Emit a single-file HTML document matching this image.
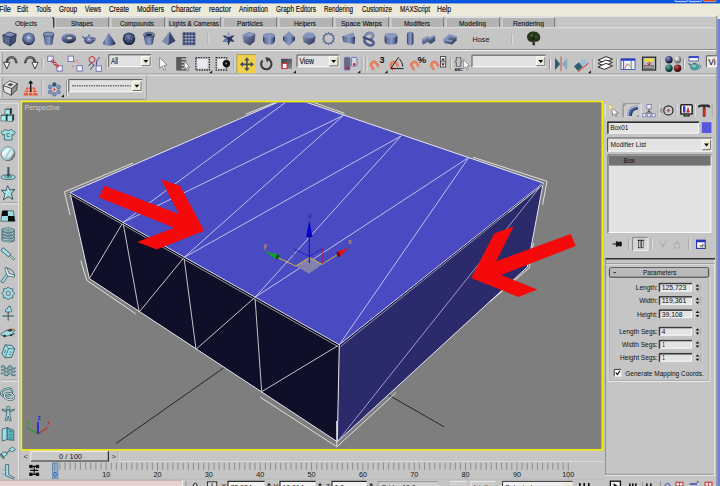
<!DOCTYPE html>
<html lang="en"><head><meta charset="utf-8"><title>3ds max - Box01</title>
<style>html,body{margin:0;padding:0;background:#c5c5c5;overflow:hidden}body{width:720px;height:486px;position:relative}svg{display:block;position:absolute;left:0;top:0}text{font-family:"Liberation Sans", sans-serif;}</style></head><body>
<svg width="720" height="486" viewBox="0 0 720 486">
<rect x="0" y="0" width="720" height="486" fill="#c5c5c5" />
<defs><linearGradient id="tb" x1="0" y1="0" x2="0" y2="1"><stop offset="0" stop-color="#0b5be6"/><stop offset="1" stop-color="#0a4fd6"/></linearGradient></defs>
<rect x="0" y="0" width="720" height="3.6" fill="url(#tb)" />
<rect x="675" y="-3" width="12.5" height="4.6" fill="#2a63e0" stroke="#e8eefc" stroke-width="0.8" rx="1"/>
<rect x="689" y="-3" width="12.5" height="4.6" fill="#2a63e0" stroke="#e8eefc" stroke-width="0.8" rx="1"/>
<rect x="703.5" y="-3" width="12.5" height="4.6" fill="#dd4a22" stroke="#f0c8b8" stroke-width="0.6" rx="1"/>
<rect x="0" y="3.6" width="720" height="12" fill="#ece9d8" />
<text x="-1" y="12.49" font-size="8.3" fill="#0c0c0c" textLength="12" lengthAdjust="spacingAndGlyphs" stroke="#0c0c0c" stroke-width="0.15">File</text>
<text x="17" y="12.49" font-size="8.3" fill="#0c0c0c" textLength="11" lengthAdjust="spacingAndGlyphs" stroke="#0c0c0c" stroke-width="0.15">Edit</text>
<text x="36" y="12.49" font-size="8.3" fill="#0c0c0c" textLength="15" lengthAdjust="spacingAndGlyphs" stroke="#0c0c0c" stroke-width="0.15">Tools</text>
<text x="59" y="12.49" font-size="8.3" fill="#0c0c0c" textLength="18" lengthAdjust="spacingAndGlyphs" stroke="#0c0c0c" stroke-width="0.15">Group</text>
<text x="85" y="12.49" font-size="8.3" fill="#0c0c0c" textLength="16" lengthAdjust="spacingAndGlyphs" stroke="#0c0c0c" stroke-width="0.15">Views</text>
<text x="109" y="12.49" font-size="8.3" fill="#0c0c0c" textLength="20" lengthAdjust="spacingAndGlyphs" stroke="#0c0c0c" stroke-width="0.15">Create</text>
<text x="137" y="12.49" font-size="8.3" fill="#0c0c0c" textLength="27" lengthAdjust="spacingAndGlyphs" stroke="#0c0c0c" stroke-width="0.15">Modifiers</text>
<text x="171" y="12.49" font-size="8.3" fill="#0c0c0c" textLength="30" lengthAdjust="spacingAndGlyphs" stroke="#0c0c0c" stroke-width="0.15">Character</text>
<text x="209" y="12.49" font-size="8.3" fill="#0c0c0c" textLength="22" lengthAdjust="spacingAndGlyphs" stroke="#0c0c0c" stroke-width="0.15">reactor</text>
<text x="239" y="12.49" font-size="8.3" fill="#0c0c0c" textLength="29" lengthAdjust="spacingAndGlyphs" stroke="#0c0c0c" stroke-width="0.15">Animation</text>
<text x="276" y="12.49" font-size="8.3" fill="#0c0c0c" textLength="40" lengthAdjust="spacingAndGlyphs" stroke="#0c0c0c" stroke-width="0.15">Graph Editors</text>
<text x="324" y="12.49" font-size="8.3" fill="#0c0c0c" textLength="29" lengthAdjust="spacingAndGlyphs" stroke="#0c0c0c" stroke-width="0.15">Rendering</text>
<text x="362" y="12.49" font-size="8.3" fill="#0c0c0c" textLength="30" lengthAdjust="spacingAndGlyphs" stroke="#0c0c0c" stroke-width="0.15">Customize</text>
<text x="400" y="12.49" font-size="8.3" fill="#0c0c0c" textLength="30" lengthAdjust="spacingAndGlyphs" stroke="#0c0c0c" stroke-width="0.15">MAXScript</text>
<text x="437" y="12.49" font-size="8.3" fill="#0c0c0c" textLength="14" lengthAdjust="spacingAndGlyphs" stroke="#0c0c0c" stroke-width="0.15">Help</text>
<line x1="0" y1="16" x2="716.5" y2="16" stroke="#fafafa" stroke-width="1" />
<rect x="716.3" y="16" width="1.2" height="470" fill="#8c8c8c" />
<rect x="717.5" y="19" width="2.5" height="467" fill="#6f82dc" />
<rect x="717.5" y="15.6" width="2.5" height="3.4" fill="#ece9d8" />
<text x="15" y="25.84" font-size="7.9" fill="#111" textLength="22" lengthAdjust="spacingAndGlyphs" stroke="#111" stroke-width="0.12">Objects</text>
<rect x="55" y="17.6" width="54" height="9.6" fill="#b3b3b3" />
<line x1="55" y1="17.6" x2="109" y2="17.6" stroke="#ebebeb" stroke-width="0.8" />
<line x1="55.3" y1="17.6" x2="55.3" y2="27.2" stroke="#dcdcdc" stroke-width="0.7" />
<line x1="108.6" y1="17.4" x2="108.6" y2="27.4" stroke="#6e6e6e" stroke-width="0.9" />
<text x="71" y="25.84" font-size="7.9" fill="#111" textLength="22" lengthAdjust="spacingAndGlyphs" stroke="#111" stroke-width="0.12">Shapes</text>
<rect x="111" y="17.6" width="54" height="9.6" fill="#b3b3b3" />
<line x1="111" y1="17.6" x2="165" y2="17.6" stroke="#ebebeb" stroke-width="0.8" />
<line x1="111.3" y1="17.6" x2="111.3" y2="27.2" stroke="#dcdcdc" stroke-width="0.7" />
<line x1="164.6" y1="17.4" x2="164.6" y2="27.4" stroke="#6e6e6e" stroke-width="0.9" />
<text x="120" y="25.84" font-size="7.9" fill="#111" textLength="34" lengthAdjust="spacingAndGlyphs" stroke="#111" stroke-width="0.12">Compounds</text>
<rect x="167" y="17.6" width="54" height="9.6" fill="#b3b3b3" />
<line x1="167" y1="17.6" x2="221" y2="17.6" stroke="#ebebeb" stroke-width="0.8" />
<line x1="167.3" y1="17.6" x2="167.3" y2="27.2" stroke="#dcdcdc" stroke-width="0.7" />
<line x1="220.6" y1="17.4" x2="220.6" y2="27.4" stroke="#6e6e6e" stroke-width="0.9" />
<text x="169" y="25.84" font-size="7.9" fill="#111" textLength="50" lengthAdjust="spacingAndGlyphs" stroke="#111" stroke-width="0.12">Lights &amp; Cameras</text>
<rect x="223" y="17.6" width="54" height="9.6" fill="#b3b3b3" />
<line x1="223" y1="17.6" x2="277" y2="17.6" stroke="#ebebeb" stroke-width="0.8" />
<line x1="223.3" y1="17.6" x2="223.3" y2="27.2" stroke="#dcdcdc" stroke-width="0.7" />
<line x1="276.6" y1="17.4" x2="276.6" y2="27.4" stroke="#6e6e6e" stroke-width="0.9" />
<text x="237" y="25.84" font-size="7.9" fill="#111" textLength="26" lengthAdjust="spacingAndGlyphs" stroke="#111" stroke-width="0.12">Particles</text>
<rect x="279" y="17.6" width="54" height="9.6" fill="#b3b3b3" />
<line x1="279" y1="17.6" x2="333" y2="17.6" stroke="#ebebeb" stroke-width="0.8" />
<line x1="279.3" y1="17.6" x2="279.3" y2="27.2" stroke="#dcdcdc" stroke-width="0.7" />
<line x1="332.6" y1="17.4" x2="332.6" y2="27.4" stroke="#6e6e6e" stroke-width="0.9" />
<text x="294" y="25.84" font-size="7.9" fill="#111" textLength="22" lengthAdjust="spacingAndGlyphs" stroke="#111" stroke-width="0.12">Helpers</text>
<rect x="335" y="17.6" width="54" height="9.6" fill="#b3b3b3" />
<line x1="335" y1="17.6" x2="389" y2="17.6" stroke="#ebebeb" stroke-width="0.8" />
<line x1="335.3" y1="17.6" x2="335.3" y2="27.2" stroke="#dcdcdc" stroke-width="0.7" />
<line x1="388.6" y1="17.4" x2="388.6" y2="27.4" stroke="#6e6e6e" stroke-width="0.9" />
<text x="341" y="25.84" font-size="7.9" fill="#111" textLength="41" lengthAdjust="spacingAndGlyphs" stroke="#111" stroke-width="0.12">Space Warps</text>
<rect x="391" y="17.6" width="53" height="9.6" fill="#b3b3b3" />
<line x1="391" y1="17.6" x2="444" y2="17.6" stroke="#ebebeb" stroke-width="0.8" />
<line x1="391.3" y1="17.6" x2="391.3" y2="27.2" stroke="#dcdcdc" stroke-width="0.7" />
<line x1="443.6" y1="17.4" x2="443.6" y2="27.4" stroke="#6e6e6e" stroke-width="0.9" />
<text x="404" y="25.84" font-size="7.9" fill="#111" textLength="26" lengthAdjust="spacingAndGlyphs" stroke="#111" stroke-width="0.12">Modifiers</text>
<rect x="446" y="17.6" width="54" height="9.6" fill="#b3b3b3" />
<line x1="446" y1="17.6" x2="500" y2="17.6" stroke="#ebebeb" stroke-width="0.8" />
<line x1="446.3" y1="17.6" x2="446.3" y2="27.2" stroke="#dcdcdc" stroke-width="0.7" />
<line x1="499.6" y1="17.4" x2="499.6" y2="27.4" stroke="#6e6e6e" stroke-width="0.9" />
<text x="459" y="25.84" font-size="7.9" fill="#111" textLength="27" lengthAdjust="spacingAndGlyphs" stroke="#111" stroke-width="0.12">Modeling</text>
<rect x="502" y="17.6" width="53" height="9.6" fill="#b3b3b3" />
<line x1="502" y1="17.6" x2="555" y2="17.6" stroke="#ebebeb" stroke-width="0.8" />
<line x1="502.3" y1="17.6" x2="502.3" y2="27.2" stroke="#dcdcdc" stroke-width="0.7" />
<line x1="554.6" y1="17.4" x2="554.6" y2="27.4" stroke="#6e6e6e" stroke-width="0.9" />
<text x="513" y="25.84" font-size="7.9" fill="#111" textLength="31" lengthAdjust="spacingAndGlyphs" stroke="#111" stroke-width="0.12">Rendering</text>
<polyline points="52.6,17.2 53.8,19 53.8,27.6" fill="none" stroke="#111" stroke-width="1.1" />
<line x1="0" y1="27.7" x2="52.5" y2="27.7" stroke="#c5c5c5" stroke-width="1" />
<line x1="54.5" y1="27.7" x2="716" y2="27.7" stroke="#e6e6e6" stroke-width="0.8" />
<defs>
<linearGradient id="gH" x1="0" y1="0" x2="1" y2="0"><stop offset="0" stop-color="#2c3654"/><stop offset="0.18" stop-color="#6676a2"/><stop offset="0.55" stop-color="#8a99c2"/><stop offset="0.8" stop-color="#55648e"/><stop offset="1" stop-color="#252e4c"/></linearGradient>
<linearGradient id="gV" x1="0" y1="0" x2="0" y2="1"><stop offset="0" stop-color="#8c9ac2"/><stop offset="1" stop-color="#2c3658"/></linearGradient>
<linearGradient id="gD" x1="0" y1="0" x2="1" y2="1"><stop offset="0" stop-color="#93a1c8"/><stop offset="1" stop-color="#262f4e"/></linearGradient>
<radialGradient id="gS" cx="0.5" cy="0.4" r="0.62"><stop offset="0" stop-color="#f4f6fc"/><stop offset="0.18" stop-color="#8c9bc2"/><stop offset="0.6" stop-color="#5a6a96"/><stop offset="1" stop-color="#161c30"/></radialGradient>
<radialGradient id="gS2" cx="0.45" cy="0.35" r="0.7"><stop offset="0" stop-color="#7a88b0"/><stop offset="0.45" stop-color="#39456c"/><stop offset="1" stop-color="#10162a"/></radialGradient>
</defs>
<g transform="translate(9.6 38.6)">
<polygon points="-6.8,-3.4 -0.5,-6.6 6.6,-4.4 1,-1.2" fill="#808fb8" stroke="#262e4a" stroke-width="0.7" stroke-linejoin="round"/>
<polygon points="-6.8,-3.4 1,-1.2 0.6,7.4 -5.8,3.8" fill="#5a6994" stroke="#262e4a" stroke-width="0.7" stroke-linejoin="round"/>
<polygon points="1,-1.2 6.6,-4.4 5.8,3.4 0.6,7.4" fill="#414e78" stroke="#262e4a" stroke-width="0.7" stroke-linejoin="round"/>
</g>
<g transform="translate(28.6 38.6)">
<circle cx="0" cy="0.2" r="6.4" fill="url(#gS)"/>
</g>
<g transform="translate(48.6 38.6)">
<path d="M-5.2,-4.2 L-3.8,5.4 A3.9,1.6 0 0 0 3.9,5.4 L5.3,-4.2 Z" fill="url(#gH)"/>
<ellipse cx="0" cy="-4.4" rx="5.3" ry="2.1" fill="#8392ba" stroke="#2b3452" stroke-width="0.6"/>
</g>
<g transform="translate(69 38.4)">
<linearGradient id="gT" x1="0.2" y1="0" x2="0.6" y2="1"><stop offset="0" stop-color="#94a2ca"/><stop offset="0.45" stop-color="#5d6c98"/><stop offset="1" stop-color="#1c2440"/></linearGradient>
<ellipse cx="-0.2" cy="0" rx="7.3" ry="5" fill="url(#gT)"/>
<ellipse cx="0.2" cy="-0.9" rx="3.1" ry="1.9" fill="#2c3658"/>
<ellipse cx="0.3" cy="-0.4" rx="2.9" ry="1.4" fill="#c5c5c5"/>
</g>
<g transform="translate(89 39.6)">
<ellipse cx="0" cy="0.6" rx="4.7" ry="3.9" fill="url(#gS)"/>
<path d="M-3.8,0 L-7.2,-3 L-6.6,-3.6 L-3,-1.6 Z" fill="#4a5884"/>
<path d="M3.8,-1.6 C6.8,-2.8 6.8,1.4 4.2,1.8" fill="none" stroke="#3f4c78" stroke-width="1.1"/>
<ellipse cx="0" cy="-3" rx="2.6" ry="0.9" fill="#8e9cc8"/>
<circle cx="0" cy="-4.3" r="0.9" fill="#55638f"/>
</g>
<g transform="translate(109 38.6)">
<linearGradient id="gC" x1="0" y1="0" x2="1" y2="0"><stop offset="0" stop-color="#3c486e"/><stop offset="0.25" stop-color="#8f9dc6"/><stop offset="0.6" stop-color="#5f6e9a"/><stop offset="1" stop-color="#222b48"/></linearGradient>
<path d="M-0.4,-5.8 L6.6,4.6 A6.4,2.6 0 0 1 -6.2,4.6 Z" fill="url(#gC)"/>
</g>
<g transform="translate(129 38.6)">
<circle cx="0" cy="0.2" r="6.3" fill="url(#gS2)"/>
<circle cx="-2" cy="-2.6" r="0.55" fill="#aab6da" opacity="0.7"/>
<circle cx="1.2" cy="-3.4" r="0.55" fill="#aab6da" opacity="0.7"/>
<circle cx="-3.4" cy="0.4" r="0.55" fill="#aab6da" opacity="0.7"/>
<circle cx="0" cy="-0.6" r="0.55" fill="#aab6da" opacity="0.7"/>
<circle cx="2.6" cy="0.8" r="0.55" fill="#aab6da" opacity="0.7"/>
<circle cx="-1" cy="2.4" r="0.55" fill="#aab6da" opacity="0.7"/>
<circle cx="2" cy="3.2" r="0.55" fill="#aab6da" opacity="0.7"/>
<circle cx="3.8" cy="-1.6" r="0.55" fill="#aab6da" opacity="0.7"/>
</g>
<g transform="translate(149 38.6)">
<path d="M-5.4,-3.8 L-3.8,5.4 A3.9,1.6 0 0 0 3.9,5.4 L5.5,-3.8 Z" fill="url(#gH)"/>
<ellipse cx="0" cy="-4" rx="5.5" ry="2.4" fill="#7f8eb6" stroke="#2b3452" stroke-width="0.6"/>
<ellipse cx="0" cy="-3.8" rx="3.3" ry="1.3" fill="#232d50"/>
</g>
<g transform="translate(168.8 38.6)">
<polygon points="0.8,-7 -7,3 -0.6,6.6" fill="#7c8bb4" />
<polygon points="0.8,-7 -0.6,6.6 6.8,2.4" fill="#39456c" />
</g>
<g transform="translate(189 38.8)">
<rect x="-6" y="-6" width="12" height="12" fill="#2a3358" />
<line x1="-3" y1="-6" x2="-3" y2="6" stroke="#a9b4d6" stroke-width="0.9" />
<line x1="-6" y1="-3" x2="6" y2="-3" stroke="#a9b4d6" stroke-width="0.9" />
<line x1="0" y1="-6" x2="0" y2="6" stroke="#a9b4d6" stroke-width="0.9" />
<line x1="-6" y1="0" x2="6" y2="0" stroke="#a9b4d6" stroke-width="0.9" />
<line x1="3" y1="-6" x2="3" y2="6" stroke="#a9b4d6" stroke-width="0.9" />
<line x1="-6" y1="3" x2="6" y2="3" stroke="#a9b4d6" stroke-width="0.9" />
<rect x="-6" y="-6" width="12" height="12" fill="none" stroke="#56628c" stroke-width="0.8"/>
</g>
<line x1="208.7" y1="33.6" x2="208.7" y2="44.4" stroke="#ededed" stroke-width="0.9" />
<line x1="207.9" y1="33.6" x2="207.9" y2="44.4" stroke="#9a9a9a" stroke-width="0.6" />
<g transform="translate(228.6 38.6)">
<polygon points="0.0,-6.86 1.5,-2.55 6.06,-3.43 3.0,0.0 6.06,3.43 1.5,2.55 0.0,6.86 -1.5,2.55 -6.06,3.43 -3.0,0.0 -6.06,-3.43 -1.5,-2.55" fill="#2b3458" />
<polygon points="0,-7 2.4,-1.6 -2.4,-1.6" fill="#97a4cc" />
<polygon points="-6,3.4 -2.4,-1.6 0,2.6" fill="#6f7dac" />
</g>
<g transform="translate(249 38.6)">
<path d="M-6.6,-2.8 Q-6.6,-4.2 -5.2,-4.6 L-0.4,-6.6 L5.6,-5 Q6.6,-4.6 6.4,-3.4 L5.6,3 L1,6.8 L-5.2,3.8 Z" fill="url(#gD)"/>
<path d="M-6.4,-3.4 L-0.4,-6.4 L6.2,-4.4 L0.8,-1.6 Z" fill="#8796be"/>
</g>
<g transform="translate(269 38.6)">
<rect x="-6" y="-5.6" width="12" height="11.6" rx="5.4" ry="4" fill="url(#gH)"/>
<ellipse cx="0" cy="-2.6" rx="5.8" ry="2.4" fill="#8796be" opacity="0.85"/>
</g>
<g transform="translate(289 38.6)">
<path d="M0,-7 L6,-1.6 L6,1.6 L0,7.4 L-6,1.6 L-6,-1.6 Z" fill="url(#gH)"/>
<path d="M0,-7 L6,-1.6 L-6,-1.6 Z" fill="#8493ba" opacity="0.8"/>
</g>
<g transform="translate(309 38.6)">
<path d="M-6.4,-2.4 L-2.4,-6 L4,-5.6 L6.6,-2 L5.6,3.6 L0.4,6.4 L-5.4,3.6 Z" fill="url(#gD)"/>
<path d="M-6.4,-2.4 L-2.4,-6 L4,-5.6 L6.6,-2 L0.6,0 Z" fill="#8594bc"/>
</g>
<g transform="translate(328.6 38.6)">
<polygon points="6.8,0.0 5.22,1.4 5.89,3.4 3.82,3.82 3.4,5.89 1.4,5.22 0.0,6.8 -1.4,5.22 -3.4,5.89 -3.82,3.82 -5.89,3.4 -5.22,1.4 -6.8,0.0 -5.22,-1.4 -5.89,-3.4 -3.82,-3.82 -3.4,-5.89 -1.4,-5.22 -0.0,-6.8 1.4,-5.22 3.4,-5.89 3.82,-3.82 5.89,-3.4 5.22,-1.4" fill="#6472a0" />
<circle cx="0" cy="0" r="4.2" fill="#c5c5c5"/>
</g>
<g transform="translate(348.8 38.6)">
<polygon points="-6.6,-2.4 4.6,-6.2 6.4,-1.6" fill="#8594bc" />
<polygon points="-6.6,-2.4 6.4,-1.6 5.8,5.4 -5.2,3.6" fill="url(#gH)" />
</g>
<g transform="translate(370 38.8)">
<path d="M-4.5,-3.5 C-1,-8 6,-5 2,-1 C-1,2 6,3 3,5.6 C0,8 -6,5 -5.5,1" fill="none" stroke="#53618f" stroke-width="2.6" stroke-linecap="round"/>
<path d="M-4.5,-3.5 C-1,-8 6,-5 2,-1" fill="none" stroke="#98a6cf" stroke-width="1.2" stroke-linecap="round"/>
<path d="M-6.4,-1.4 L0.5,1.2" stroke="#3a4672" stroke-width="2.2" stroke-linecap="round"/>
</g>
<g transform="translate(391 38.6)">
<rect x="-6.4" y="-5.4" width="12.8" height="11.4" rx="4.4" ry="3.6" fill="url(#gH)"/>
<ellipse cx="0" cy="-3" rx="6" ry="2.5" fill="#8998c0"/>
</g>
<g transform="translate(410.2 38.6)">
<rect x="-3.3" y="-6.8" width="6.6" height="13.8" rx="3.3" fill="url(#gH)"/>
</g>
<g transform="translate(428.6 38.6)">
<path d="M-6.6,0.4 L-1,-2.4 L1.4,-1 L5,-3.4 L6.6,-2.4 L6.6,2.4 L2,5.4 L-1,3.4 L-5.2,5.8 L-6.6,4.6 Z" fill="url(#gD)"/>
<path d="M-6.6,0.4 L-1,-2.4 L1.4,-1 L5,-3.4 L6.6,-2.4 L1.6,0.8 L-1,-0.4 L-5,1.8 Z" fill="#8796be"/>
</g>
<g transform="translate(450 38.6)">
<path d="M-7,1 L-0.6,-4.4 L6.6,-2 L6.6,1.6 L2.4,5.8 L-5.4,4.6 Z" fill="url(#gD)"/>
<path d="M-7,1 L-0.6,-4.4 L6.6,-2 L4.8,-0.4 L0,-2 L-3,0.6 L2.8,2.2 L1.4,3.6 L-5.6,1.8 Z" fill="#8796be"/>
</g>
<text x="472.6" y="41.54" font-size="7.6" fill="#111" textLength="16.8" lengthAdjust="spacingAndGlyphs" >Hose</text>
<line x1="512.6" y1="33.6" x2="512.6" y2="44.4" stroke="#ededed" stroke-width="0.9" />
<line x1="511.8" y1="33.6" x2="511.8" y2="44.4" stroke="#9a9a9a" stroke-width="0.6" />
<g transform="translate(533.6 38.2)">
<path d="M-0.8,2 L-1.2,7 L1.6,7 L0.8,2 Z" fill="#33301e"/>
<path d="M-6.4,0 C-7.4,-3.4 -4,-6.8 -0.6,-6.6 C3.4,-7.4 7.2,-4 6.6,-0.4 C7,2.6 3.6,4.2 0.6,3.2 C-2.4,4.6 -6,3 -6.4,0 Z" fill="#26351c"/>
<circle cx="-2" cy="-3" r="1.6" fill="#3f5a2c"/><circle cx="2.6" cy="-1.2" r="1.4" fill="#36502a"/><circle cx="-0.4" cy="0.8" r="1.2" fill="#162010"/>
</g>
<line x1="0" y1="49.5" x2="716.5" y2="49.5" stroke="#8f8f8f" stroke-width="1" />
<line x1="0" y1="50.5" x2="716.5" y2="50.5" stroke="#f2f2f2" stroke-width="1" />
<line x1="0" y1="74.1" x2="716.5" y2="74.1" stroke="#8f8f8f" stroke-width="1" />
<line x1="0" y1="75.1" x2="716.5" y2="75.1" stroke="#f2f2f2" stroke-width="1" />
<line x1="1.1" y1="53" x2="1.1" y2="73" stroke="#f0f0f0" stroke-width="1" />
<line x1="2.1" y1="53" x2="2.1" y2="73" stroke="#909090" stroke-width="1" />
<g transform="translate(11.1 0) scale(1 1)">
<path d="M5.4,63.2 C5.2,55.4 -4.2,55.2 -4.3,63" fill="none" stroke="#484848" stroke-width="2.5"/>
<path d="M5.6,61 C4.6,56.6 -1,56 -3,59" fill="none" stroke="#8a8a8a" stroke-width="0.8"/>
<path d="M-7.5,62.3 L-1.3,62.3 L-4.3,69 Z" fill="#f4f4f4" stroke="#333" stroke-width="0.9" stroke-linejoin="round"/>
</g>
<g transform="translate(30.6 0) scale(-1 1)">
<path d="M5.4,63.2 C5.2,55.4 -4.2,55.2 -4.3,63" fill="none" stroke="#484848" stroke-width="2.5"/>
<path d="M5.6,61 C4.6,56.6 -1,56 -3,59" fill="none" stroke="#8a8a8a" stroke-width="0.8"/>
<path d="M-7.5,62.3 L-1.3,62.3 L-4.3,69 Z" fill="#f4f4f4" stroke="#333" stroke-width="0.9" stroke-linejoin="round"/>
</g>
<line x1="42.2" y1="58.5" x2="42.2" y2="69.5" stroke="#8a8a8a" stroke-width="0.9" />
<line x1="43.1" y1="58.5" x2="43.1" y2="69.5" stroke="#efefef" stroke-width="0.9" />
<rect x="47.699999999999996" y="56.099999999999994" width="5.4" height="5.4" fill="#f0f0fa" stroke="#6a6aae" stroke-width="0.85"/>
<rect x="56.9" y="65.7" width="5.4" height="5.4" fill="#f0f0fa" stroke="#6a6aae" stroke-width="0.85"/>
<circle cx="52.7" cy="61.2" r="1.3" fill="none" stroke="#c8202a" stroke-width="0.9"/>
<circle cx="55.0" cy="63.6" r="1.3" fill="none" stroke="#c8202a" stroke-width="0.9"/>
<circle cx="57.3" cy="66.0" r="1.3" fill="none" stroke="#c8202a" stroke-width="0.9"/>
<rect x="68.1" y="56.099999999999994" width="5.4" height="5.4" fill="#f0f0fa" stroke="#6a6aae" stroke-width="0.85"/>
<rect x="76.89999999999999" y="65.7" width="5.4" height="5.4" fill="#f0f0fa" stroke="#6a6aae" stroke-width="0.85"/>
<path d="M73.6,62.4 l1.8,-1.6 M76.4,60 l1.6,1 M72.6,65.6 l0.6,1.8 M78,63 l1,-0.4" stroke="#d0606a" stroke-width="0.9" fill="none"/>
<circle cx="92" cy="59.6" r="3" fill="none" stroke="#c8202a" stroke-width="0.9"/>
<path d="M88.8,66 C90.4,62.4 92.6,63.2 93.8,65.4 M96.4,66 C96,61 97.6,58.6 100,57.4 M90.6,69.6 C91.4,66.4 93.6,67 94,65" stroke="#35398c" stroke-width="1" fill="none"/>
<rect x="96.1" y="65.89999999999999" width="5.4" height="5.4" fill="#f0f0fa" stroke="#6a6aae" stroke-width="0.85"/>
<line x1="106.2" y1="58.5" x2="106.2" y2="69.5" stroke="#8a8a8a" stroke-width="0.9" />
<line x1="107.10000000000001" y1="58.5" x2="107.10000000000001" y2="69.5" stroke="#efefef" stroke-width="0.9" />
<rect x="108.8" y="54.8" width="42.4" height="12.2" fill="#e1e1e1" />
<polyline points="108.8,67.0 108.8,54.8 151.2,54.8" fill="none" stroke="#555" stroke-width="1" />
<polyline points="109.3,66.5 150.7,66.5 150.7,55.3" fill="none" stroke="#f8f8f8" stroke-width="1" />
<text x="111" y="64.45" font-size="8.2" fill="#111" textLength="7" lengthAdjust="spacingAndGlyphs" stroke="#111" stroke-width="0.12">All</text>
<rect x="141" y="56" width="9.7" height="10.2" fill="#ece9d8" />
<polyline points="141.5,65.7 141.5,56.5 150.2,56.5" fill="none" stroke="#fff" stroke-width="1" />
<polyline points="141.5,65.7 150.2,65.7 150.2,56.5" fill="none" stroke="#6d6d6d" stroke-width="1" />
<polygon points="143.45,59.9 148.25,59.9 145.85,62.7" fill="#000" />
<path d="M159.6,57.4 L159.6,68.4 L162,66 L163.8,70.2 L165.6,69.4 L163.8,65.4 L167,65.2 Z" fill="#f8f8f8" stroke="#6a6a6a" stroke-width="0.7" stroke-linejoin="round"/>
<rect x="176.2" y="57" width="10" height="13.6" fill="#5a5a5a" />
<rect x="181.6" y="58.4" width="4.6" height="1.5" fill="#c9c9c9" />
<rect x="181.6" y="61.5" width="4.6" height="1.5" fill="#c9c9c9" />
<rect x="181.6" y="64.6" width="4.6" height="1.5" fill="#c9c9c9" />
<rect x="181.6" y="67.7" width="4.6" height="1.5" fill="#c9c9c9" />
<path d="M184.2,60.6 L184.2,69.6 L186,67.8 L187.4,71 L188.8,70.4 L187.4,67.4 L189.8,67.2 Z" fill="#f6f6f6" stroke="#4a4a4a" stroke-width="0.6" stroke-linejoin="round"/>
<rect x="197.4" y="59" width="10.2" height="9.4" fill="#e9e9f1" />
<rect x="195.8" y="57.6" width="13.6" height="12.4" fill="none" stroke="#202020" stroke-width="1.3" stroke-dasharray="1.3 1.2"/>
<polygon points="212.2,70.19999999999999 212.2,73.19999999999999 209.2,73.19999999999999" fill="#222" />
<rect x="217.6" y="59" width="7" height="9.4" fill="#e9e9f1" />
<rect x="216.2" y="57.6" width="10.4" height="12.4" fill="none" stroke="#202020" stroke-width="1.3" stroke-dasharray="1.3 1.2"/>
<circle cx="226.4" cy="63.6" r="3.7" fill="#111"/><circle cx="226.2" cy="63.4" r="1" fill="#8a8a8a"/>
<line x1="234" y1="58.5" x2="234" y2="69.5" stroke="#8a8a8a" stroke-width="0.9" />
<line x1="234.9" y1="58.5" x2="234.9" y2="69.5" stroke="#efefef" stroke-width="0.9" />
<rect x="236.8" y="54.6" width="19.2" height="18.6" fill="#efd04a" />
<polyline points="236.8,73.2 236.8,54.6 256,54.6" fill="none" stroke="#a09050" stroke-width="0.8" />
<g transform="translate(246.9 64.3)" fill="#454c5c" stroke="none">
<rect x="-4.6" y="-0.8" width="9.2" height="1.6"/><rect x="-0.8" y="-4.6" width="1.6" height="9.2"/>
<path d="M0,-7 L2.6,-3.8 L-2.6,-3.8 Z M0,7 L2.6,3.8 L-2.6,3.8 Z M-7,0 L-3.8,-2.6 L-3.8,2.6 Z M7,0 L3.8,-2.6 L3.8,2.6 Z"/>
</g>
<path d="M262.6,60.4 A5.2,5.2 0 1 0 268.6,59.4" fill="none" stroke="#3e3e3e" stroke-width="2.1"/>
<path d="M265.4,57 L270.6,58.4 L266.8,62.4 Z" fill="#3e3e3e"/>
<linearGradient id="gsc" x1="0" y1="0" x2="1" y2="1"><stop offset="0" stop-color="#3a3a3e"/><stop offset="1" stop-color="#8c8c90"/></linearGradient>
<rect x="281.2" y="58.8" width="10.8" height="10" fill="url(#gsc)" />
<rect x="282.2" y="63.4" width="4.8" height="5.2" fill="#fdfdfd" stroke="#d03038" stroke-width="1"/>
<polygon points="296.0,70.19999999999999 296.0,73.19999999999999 293.0,73.19999999999999" fill="#222" />
<rect x="297" y="55" width="42.4" height="12.2" fill="#e1e1e1" />
<polyline points="297,67.2 297,55 339.4,55" fill="none" stroke="#555" stroke-width="1" />
<polyline points="297.5,66.7 338.9,66.7 338.9,55.5" fill="none" stroke="#f8f8f8" stroke-width="1" />
<text x="299.4" y="64.45" font-size="8.2" fill="#111" textLength="14.6" lengthAdjust="spacingAndGlyphs" stroke="#111" stroke-width="0.12">View</text>
<rect x="328.8" y="56.2" width="9.7" height="10.2" fill="#ece9d8" />
<polyline points="329.3,65.9 329.3,56.7 338.0,56.7" fill="none" stroke="#fff" stroke-width="1" />
<polyline points="329.3,65.9 338.0,65.9 338.0,56.7" fill="none" stroke="#6d6d6d" stroke-width="1" />
<polygon points="331.25000000000006,60.1 336.05,60.1 333.65000000000003,62.900000000000006" fill="#000" />
<rect x="344.4" y="57.4" width="5.6" height="12.6" fill="#6a6a72" stroke="#5064c0" stroke-width="0.8" rx="1"/>
<rect x="351.4" y="57.4" width="5.6" height="8.8" fill="#d6d6e2" stroke="#5064c0" stroke-width="0.8" rx="1"/>
<circle cx="347.2" cy="67.8" r="1.3" fill="#e01818"/><circle cx="354.2" cy="64.4" r="1.3" fill="#e01818"/>
<polygon points="360.40000000000003,70.19999999999999 360.40000000000003,73.19999999999999 357.40000000000003,73.19999999999999" fill="#222" />
<line x1="362.2" y1="57" x2="362.2" y2="71" stroke="#8a8a8a" stroke-width="0.9" />
<line x1="363.09999999999997" y1="57" x2="363.09999999999997" y2="71" stroke="#efefef" stroke-width="0.9" />
<line x1="366" y1="57" x2="366" y2="71" stroke="#8a8a8a" stroke-width="0.9" />
<line x1="366.9" y1="57" x2="366.9" y2="71" stroke="#efefef" stroke-width="0.9" />
<g transform="translate(374.4 65.4) rotate(-35) scale(0.86)">
<path d="M-3.4,4.4 L-3.4,-0.6 A3.4,3.4 0 0 1 3.4,-0.6 L3.4,4.4" fill="none" stroke="#e8572c" stroke-width="2.5"/>
<path d="M-3.4,4.4 L-3.4,-0.6 A3.4,3.4 0 0 1 3.4,-0.6 L3.4,4.4" fill="none" stroke="#f7b49a" stroke-width="0.8"/>
<rect x="-4.7" y="3.6" width="2.6" height="1.7" fill="#f4f4f4" stroke="#7a3a2a" stroke-width="0.3"/><rect x="2.1" y="3.6" width="2.6" height="1.7" fill="#f4f4f4" stroke="#7a3a2a" stroke-width="0.3"/>
</g>
<text x="379.6" y="62.84" font-size="9" fill="#111" font-weight="bold">3</text>
<polygon points="387.6,70.19999999999999 387.6,73.19999999999999 384.6,73.19999999999999" fill="#222" />
<g transform="translate(394 65.4) rotate(-35) scale(0.86)">
<path d="M-3.4,4.4 L-3.4,-0.6 A3.4,3.4 0 0 1 3.4,-0.6 L3.4,4.4" fill="none" stroke="#e8572c" stroke-width="2.5"/>
<path d="M-3.4,4.4 L-3.4,-0.6 A3.4,3.4 0 0 1 3.4,-0.6 L3.4,4.4" fill="none" stroke="#f7b49a" stroke-width="0.8"/>
<rect x="-4.7" y="3.6" width="2.6" height="1.7" fill="#f4f4f4" stroke="#7a3a2a" stroke-width="0.3"/><rect x="2.1" y="3.6" width="2.6" height="1.7" fill="#f4f4f4" stroke="#7a3a2a" stroke-width="0.3"/>
</g>
<path d="M390.6,68.6 L403.6,68.6 M390.8,68.4 L398.6,57.2 M399.4,58.8 Q402.6,62 402.8,66.6" fill="none" stroke="#111" stroke-width="0.9"/>
<g transform="translate(414.6 65.4) rotate(-35) scale(0.86)">
<path d="M-3.4,4.4 L-3.4,-0.6 A3.4,3.4 0 0 1 3.4,-0.6 L3.4,4.4" fill="none" stroke="#e8572c" stroke-width="2.5"/>
<path d="M-3.4,4.4 L-3.4,-0.6 A3.4,3.4 0 0 1 3.4,-0.6 L3.4,4.4" fill="none" stroke="#f7b49a" stroke-width="0.8"/>
<rect x="-4.7" y="3.6" width="2.6" height="1.7" fill="#f4f4f4" stroke="#7a3a2a" stroke-width="0.3"/><rect x="2.1" y="3.6" width="2.6" height="1.7" fill="#f4f4f4" stroke="#7a3a2a" stroke-width="0.3"/>
</g>
<text x="417.6" y="62.84" font-size="9" fill="#111" textLength="8.8" lengthAdjust="spacingAndGlyphs" font-weight="bold">%</text>
<g transform="translate(434.6 65.4) rotate(-35) scale(0.86)">
<path d="M-3.4,4.4 L-3.4,-0.6 A3.4,3.4 0 0 1 3.4,-0.6 L3.4,4.4" fill="none" stroke="#e8572c" stroke-width="2.5"/>
<path d="M-3.4,4.4 L-3.4,-0.6 A3.4,3.4 0 0 1 3.4,-0.6 L3.4,4.4" fill="none" stroke="#f7b49a" stroke-width="0.8"/>
<rect x="-4.7" y="3.6" width="2.6" height="1.7" fill="#f4f4f4" stroke="#7a3a2a" stroke-width="0.3"/><rect x="2.1" y="3.6" width="2.6" height="1.7" fill="#f4f4f4" stroke="#7a3a2a" stroke-width="0.3"/>
</g>
<rect x="440.4" y="56.6" width="5.4" height="10.4" fill="#e8e8e8" stroke="#333" stroke-width="0.8"/>
<line x1="440.4" y1="61.8" x2="445.8" y2="61.8" stroke="#333" stroke-width="0.7" />
<polygon points="443.1,58 444.8,60.4 441.4,60.4" fill="#111" />
<polygon points="443.1,65.8 444.8,63.4 441.4,63.4" fill="#111" />
<line x1="450.4" y1="58.5" x2="450.4" y2="69.5" stroke="#8a8a8a" stroke-width="0.9" />
<line x1="451.29999999999995" y1="58.5" x2="451.29999999999995" y2="69.5" stroke="#efefef" stroke-width="0.9" />
<text x="454.2" y="65.0" font-size="10" fill="#5c5c5c" textLength="8.4" lengthAdjust="spacingAndGlyphs" >{}</text>
<text x="454.4" y="70.71" font-size="4.2" fill="#222" textLength="8.4" lengthAdjust="spacingAndGlyphs" font-weight="bold">ABC</text>
<path d="M463.6,59.4 L463.6,68.6 L465.6,66.8 L467,70.2 L468.4,69.6 L467,66.2 L469.6,66 Z" fill="#f6f6f6" stroke="#6a6a6a" stroke-width="0.6" stroke-linejoin="round"/>
<rect x="472" y="55.2" width="74" height="12" fill="#e1e1e1" />
<polyline points="472,67.2 472,55.2 546,55.2" fill="none" stroke="#555" stroke-width="1" />
<polyline points="472.5,66.7 545.5,66.7 545.5,55.7" fill="none" stroke="#f8f8f8" stroke-width="1" />
<rect x="536" y="56.4" width="9.4" height="9.8" fill="#ece9d8" />
<polyline points="536.5,65.7 536.5,56.9 544.9,56.9" fill="none" stroke="#fff" stroke-width="1" />
<polyline points="536.5,65.7 544.9,65.7 544.9,56.9" fill="none" stroke="#6d6d6d" stroke-width="1" />
<polygon points="538.3000000000001,60.099999999999994 543.1,60.099999999999994 540.7,62.9" fill="#000" />
<line x1="549.6" y1="58.5" x2="549.6" y2="69.5" stroke="#8a8a8a" stroke-width="0.9" />
<line x1="550.5" y1="58.5" x2="550.5" y2="69.5" stroke="#efefef" stroke-width="0.9" />
<polygon points="555,57.8 560.2,64 555,70.2" fill="#2d5f70" />
<polygon points="567.2,57.8 562,64 567.2,70.2" fill="#86a9b8" />
<line x1="561.1" y1="56.6" x2="561.1" y2="71.2" stroke="#d83a3a" stroke-width="0.9" />
<g transform="translate(581 64.4) rotate(-40)">
<rect x="-6.6" y="-3" width="6.4" height="6" fill="#2d5f70" />
<rect x="-0.2" y="-3" width="6.6" height="6" fill="#9fbfd6" />
<line x1="-6.8" y1="3.9" x2="6.6" y2="3.9" stroke="#e04848" stroke-width="1" />
</g>
<polygon points="591.0,70.19999999999999 591.0,73.19999999999999 588.0,73.19999999999999" fill="#222" />
<line x1="593" y1="58.5" x2="593" y2="69.5" stroke="#8a8a8a" stroke-width="0.9" />
<line x1="593.9" y1="58.5" x2="593.9" y2="69.5" stroke="#efefef" stroke-width="0.9" />
<polygon points="598,60.2 606,56.6 612.4,59.0 604.6,62.6" fill="#fafafa" stroke="#1c1c1c" stroke-width="0.9" stroke-linejoin="round"/>
<polygon points="598,63.6 606,60.0 612.4,62.4 604.6,66.0" fill="#fafafa" stroke="#1c1c1c" stroke-width="0.9" stroke-linejoin="round"/>
<polygon points="598,67.0 606,63.400000000000006 612.4,65.80000000000001 604.6,69.4" fill="#fafafa" stroke="#1c1c1c" stroke-width="0.9" stroke-linejoin="round"/>
<line x1="616.8" y1="58.5" x2="616.8" y2="69.5" stroke="#8a8a8a" stroke-width="0.9" />
<line x1="617.6999999999999" y1="58.5" x2="617.6999999999999" y2="69.5" stroke="#efefef" stroke-width="0.9" />
<rect x="621" y="58.8" width="14" height="10.6" fill="#f8f8f8" stroke="#2c3ca8" stroke-width="0.8"/>
<rect x="621" y="58.8" width="14" height="2" fill="#2c3cc8" />
<line x1="623.6" y1="61" x2="623.6" y2="69.4" stroke="#3048c8" stroke-width="1" />
<line x1="631.2" y1="61" x2="631.2" y2="69.4" stroke="#28b038" stroke-width="1" />
<path d="M625,68.8 Q627,60.6 630,66.4" fill="none" stroke="#d83030" stroke-width="0.8"/>
<line x1="621" y1="64" x2="635" y2="64" stroke="#b8c0e0" stroke-width="0.5" />
<line x1="621" y1="66.8" x2="635" y2="66.8" stroke="#b8c0e0" stroke-width="0.5" />
<rect x="642.6" y="57.2" width="13" height="12.8" fill="#bcbcbc" stroke="#2a2a2a" stroke-width="1.3"/>
<rect x="644.6" y="58.8" width="9" height="2.8" fill="#f2e22a" />
<rect x="644.6" y="65.4" width="9" height="3.2" fill="#9a9a9a" stroke="#444" stroke-width="0.5"/>
<path d="M649.1,61.8 L649.1,65 M647.4,63.4 L649.1,65.2 L650.8,63.4" stroke="#d82020" stroke-width="1" fill="none"/>
<line x1="661" y1="58.5" x2="661" y2="69.5" stroke="#8a8a8a" stroke-width="0.9" />
<line x1="661.9" y1="58.5" x2="661.9" y2="69.5" stroke="#efefef" stroke-width="0.9" />
<radialGradient id="m66959" cx="0.36" cy="0.3" r="0.62"><stop offset="0" stop-color="#8a96d0"/><stop offset="1" stop-color="#0c1238"/></radialGradient>
<circle cx="669" cy="59.8" r="3.7" fill="url(#m66959)"/>
<radialGradient id="m67759" cx="0.36" cy="0.3" r="0.62"><stop offset="0" stop-color="#ffffff"/><stop offset="1" stop-color="#6a6a6a"/></radialGradient>
<circle cx="677.6" cy="59.8" r="3.7" fill="url(#m67759)"/>
<radialGradient id="m66968" cx="0.36" cy="0.3" r="0.62"><stop offset="0" stop-color="#58b8a8"/><stop offset="1" stop-color="#06342e"/></radialGradient>
<circle cx="669" cy="68.2" r="3.7" fill="url(#m66968)"/>
<radialGradient id="m67768" cx="0.36" cy="0.3" r="0.62"><stop offset="0" stop-color="#c85050"/><stop offset="1" stop-color="#3a0a0a"/></radialGradient>
<circle cx="677.6" cy="68.2" r="3.7" fill="url(#m67768)"/>
<line x1="683.6" y1="58.5" x2="683.6" y2="69.5" stroke="#8a8a8a" stroke-width="0.9" />
<line x1="684.5" y1="58.5" x2="684.5" y2="69.5" stroke="#efefef" stroke-width="0.9" />
<rect x="689" y="56.4" width="9.4" height="4.6" fill="#f8f8f8" stroke="#2c3ca8" stroke-width="0.7"/>
<rect x="689" y="56.4" width="9.4" height="1.6" fill="#2c3cc8" />
<ellipse cx="694.6" cy="67" rx="4.6" ry="3.4" fill="#4f9aa0"/><ellipse cx="694" cy="66" rx="2.4" ry="1.4" fill="#9fd0d2" opacity="0.7"/>
<path d="M690.4,66 L687.4,63.6 L688,63 L691.2,64.6 Z" fill="#3c7a80"/><path d="M698.6,65 C701.6,64.4 701.4,68.2 698.8,68.4" fill="none" stroke="#3c7a80" stroke-width="0.9"/>
<ellipse cx="694.6" cy="63.6" rx="2" ry="0.8" fill="#3c7a80"/>
<rect x="706.4" y="55.8" width="10.2" height="11.4" fill="#ececec" />
<polyline points="706.4,67.2 706.4,55.8 716.6,55.8" fill="none" stroke="#555" stroke-width="1" />
<polyline points="706.9,66.7 716.1,66.7 716.1,56.3" fill="none" stroke="#f8f8f8" stroke-width="1" />
<text x="708.2" y="64.55" font-size="8.2" fill="#111" textLength="7.4" lengthAdjust="spacingAndGlyphs" stroke="#111" stroke-width="0.12">Vi</text>
<line x1="1.1" y1="77.5" x2="1.1" y2="97.5" stroke="#f0f0f0" stroke-width="1" />
<line x1="2.1" y1="77.5" x2="2.1" y2="97.5" stroke="#909090" stroke-width="1" />
<line x1="0" y1="99.3" x2="146" y2="99.3" stroke="#8f8f8f" stroke-width="0.9" />
<line x1="145.2" y1="75.4" x2="145.2" y2="99.4" stroke="#f0f0f0" stroke-width="0.9" />
<line x1="146.1" y1="75" x2="146.1" y2="99.6" stroke="#8f8f8f" stroke-width="0.9" />
<polygon points="3.2,85.6 9.4,80.8 17.4,83.6 11.6,88.6" fill="#f4f4f4" stroke="#3a3a3a" stroke-width="0.8" stroke-linejoin="round"/>
<polygon points="3.2,85.6 11.6,88.6 11.2,95.4 3.8,91.6" fill="#e4e4e4" stroke="#3a3a3a" stroke-width="0.8" stroke-linejoin="round"/>
<polygon points="11.6,88.6 17.4,83.6 16.8,90 11.2,95.4" fill="#8e8e8e" stroke="#3a3a3a" stroke-width="0.8" stroke-linejoin="round"/>
<polygon points="7,85 10,82.8 13.8,84.2 11,86.6" fill="#5a5a5a" />
<polygon points="26.4,87.4 35,87.4 38,95.4 23.4,95.4" fill="#e05a40" />
<line x1="29.238" y1="87.4" x2="28.218" y2="95.4" stroke="#f8d0c0" stroke-width="0.7" />
<line x1="32.076" y1="87.4" x2="33.036" y2="95.4" stroke="#f8d0c0" stroke-width="0.7" />
<line x1="25.4" y1="90" x2="36" y2="90" stroke="#f8d0c0" stroke-width="0.7" />
<line x1="24.4" y1="92.6" x2="37" y2="92.6" stroke="#f8d0c0" stroke-width="0.7" />
<line x1="30.7" y1="92" x2="30.7" y2="82.4" stroke="#111" stroke-width="1.3" />
<polygon points="30.7,80.2 33.2,83.6 28.2,83.6" fill="#111" />
<line x1="42" y1="80" x2="42" y2="96" stroke="#8a8a8a" stroke-width="0.9" />
<line x1="42.9" y1="80" x2="42.9" y2="96" stroke="#efefef" stroke-width="0.9" />
<circle cx="54.4" cy="84.5" r="1.9" fill="#245a78" stroke="#3c4c80" stroke-width="0.5"/>
<circle cx="58.6" cy="87.0" r="1.9" fill="#7f9ac8" stroke="#3c4c80" stroke-width="0.5"/>
<circle cx="58.6" cy="91.9" r="1.9" fill="#7f9ac8" stroke="#3c4c80" stroke-width="0.5"/>
<circle cx="54.4" cy="94.3" r="1.9" fill="#7f9ac8" stroke="#3c4c80" stroke-width="0.5"/>
<circle cx="50.2" cy="91.9" r="1.9" fill="#7f9ac8" stroke="#3c4c80" stroke-width="0.5"/>
<circle cx="50.2" cy="87.0" r="1.9" fill="#7f9ac8" stroke="#3c4c80" stroke-width="0.5"/>
<circle cx="54.4" cy="89.4" r="1" fill="#e02828"/>
<polygon points="64.0,94.19999999999999 64.0,97.19999999999999 61.0,97.19999999999999" fill="#222" />
<line x1="66.6" y1="80" x2="66.6" y2="96" stroke="#8a8a8a" stroke-width="0.9" />
<line x1="67.5" y1="80" x2="67.5" y2="96" stroke="#efefef" stroke-width="0.9" />
<rect x="68.8" y="79.6" width="73.4" height="12.6" fill="#e1e1e1" />
<polyline points="68.8,92.19999999999999 68.8,79.6 142.2,79.6" fill="none" stroke="#555" stroke-width="1" />
<polyline points="69.3,91.69999999999999 141.7,91.69999999999999 141.7,80.1" fill="none" stroke="#f8f8f8" stroke-width="1" />
<line x1="72" y1="85.8" x2="130.6" y2="85.8" stroke="#222" stroke-width="0.9" stroke-dasharray="1.5 0.9"/>
<rect x="132.2" y="80.8" width="9.4" height="10.2" fill="#ece9d8" />
<polyline points="132.7,90.5 132.7,81.3 141.1,81.3" fill="none" stroke="#fff" stroke-width="1" />
<polyline points="132.7,90.5 141.1,90.5 141.1,81.3" fill="none" stroke="#6d6d6d" stroke-width="1" />
<polygon points="134.49999999999997,84.69999999999999 139.29999999999998,84.69999999999999 136.89999999999998,87.49999999999999" fill="#000" />
<line x1="18.5" y1="103" x2="18.5" y2="479" stroke="#e9e9e9" stroke-width="0.9" />
<line x1="19.6" y1="100" x2="19.6" y2="479" stroke="#b2b2ba" stroke-width="0.9" />
<line x1="0" y1="103.3" x2="18.5" y2="103.3" stroke="#e6e6e6" stroke-width="0.8" />
<g transform="translate(8.2 115)">
<g transform="translate(-0.6 -3.2)">
<polygon points="-2.6,-2.2 -1,-3.4 4,-3.4 2.4,-2.2" fill="#dcfafa" stroke="#24302e" stroke-width="0.5" stroke-linejoin="round"/>
<polygon points="2.4,-2.2 4,-3.4 4,2 2.4,3.2" fill="#1e2c2c" stroke="#1e2c2c" stroke-width="0.5" stroke-linejoin="round"/>
<rect x="-2.6" y="-2.2" width="5" height="5.4" fill="#a4eeee" stroke="#2a3a3a" stroke-width="0.5"/>
</g>
<g transform="translate(-4.6 2.8)">
<polygon points="-2.6,-2.2 -1,-3.4 4,-3.4 2.4,-2.2" fill="#dcfafa" stroke="#24302e" stroke-width="0.5" stroke-linejoin="round"/>
<polygon points="2.4,-2.2 4,-3.4 4,2 2.4,3.2" fill="#1e2c2c" stroke="#1e2c2c" stroke-width="0.5" stroke-linejoin="round"/>
<rect x="-2.6" y="-2.2" width="5" height="5.4" fill="#a4eeee" stroke="#2a3a3a" stroke-width="0.5"/>
</g>
<g transform="translate(1.6 3)">
<polygon points="-2.6,-2.2 -1,-3.4 4,-3.4 2.4,-2.2" fill="#dcfafa" stroke="#24302e" stroke-width="0.5" stroke-linejoin="round"/>
<polygon points="2.4,-2.2 4,-3.4 4,2 2.4,3.2" fill="#1e2c2c" stroke="#1e2c2c" stroke-width="0.5" stroke-linejoin="round"/>
<rect x="-2.6" y="-2.2" width="5" height="5.4" fill="#a4eeee" stroke="#2a3a3a" stroke-width="0.5"/>
</g>
</g>
<g transform="translate(8.2 134.6)">
<path d="M-3,-5 L-7,-2.4 L-5.4,0.6 L-3.8,-0.4 L-3.8,5.4 L3.8,5.4 L3.8,-0.4 L5.4,0.6 L7,-2.4 L3,-5 Q0,-3 -3,-5 Z" fill="#9fdde6" stroke="#2c4a52" stroke-width="0.7" stroke-linejoin="round"/>
<text x="-1.9" y="2.2" font-size="5" fill="#2f6a78" font-weight="bold">C</text>
</g>
<g transform="translate(8.2 153.8)">
<radialGradient id="gB" cx="0.35" cy="0.3" r="0.8"><stop offset="0" stop-color="#ffffff"/><stop offset="0.55" stop-color="#e2e8ea"/><stop offset="1" stop-color="#6e7678"/></radialGradient>
<circle cx="-0.2" cy="0" r="6.9" fill="url(#gB)" stroke="#3a4a4e" stroke-width="0.6"/>
<path d="M3,-6 C0,-3 -3,2 -4.4,5.2 L-1.6,6.6 C-1,3 1.6,-2.4 5,-4.6 Z" fill="#8fdce6" opacity="0.95"/>
<path d="M-6.6,-1.6 C-4.6,-2.6 -1.6,-5 0,-6.8 L-3,-6.2 C-5,-5 -6.4,-3.4 -6.6,-1.6 Z" fill="#8fdce6" opacity="0.9"/>
<path d="M6.4,-1 C4,1 2.6,4 2.2,6.4 L4.6,5 C5.8,3.4 6.6,1.4 6.4,-1 Z" fill="#6a7678" opacity="0.7"/>
</g>
<g transform="translate(8.2 173.6)">
<ellipse cx="0" cy="3.6" rx="7.2" ry="2.5" fill="#9fdde6" stroke="#2c4a52" stroke-width="0.7" stroke-linejoin="round"/>
<ellipse cx="0" cy="3.2" rx="3.6" ry="1.2" fill="none" stroke="#2c4a52" stroke-width="0.7"/>
<path d="M-0.7,3 L-0.5,-6.4 L0.9,-6.4 L1.1,3 Z" fill="#3a5258" stroke="#2c4a52" stroke-width="0.4"/>
</g>
<g transform="translate(8.2 192.8)">
<path d="M-0.6,-7 L1.6,-2.8 L6.6,-3.4 L3.2,0.6 L4.6,6.6 L0,3.8 L-4.8,7 L-3,1.2 L-6.8,-2.6 L-2,-2.4 Z" fill="#9fdde6" stroke="#1e3238" stroke-width="0.8" stroke-linejoin="round"/>
<path d="M-0.6,-5 L0.6,-2 L-1.8,1 L-3,5" fill="none" stroke="#e6fbfd" stroke-width="1" opacity="0.8"/>
</g>
<line x1="1" y1="202.9" x2="17.5" y2="202.9" stroke="#9a9a9a" stroke-width="1" />
<line x1="1" y1="203.9" x2="17.5" y2="203.9" stroke="#efefef" stroke-width="1" />
<g transform="translate(8.2 216)">
<polygon points="-5.8,-5.2 5,-5.2 6.8,5.2 -7.4,5.2" fill="#9fdde6" stroke="#2c4a52" stroke-width="0.7" stroke-linejoin="round"/>
<polygon points="-5.8,-5.2 -0.4,-5.2 -0.3,0 -6.6,0" fill="#0c0c0c" />
<polygon points="-0.3,0 5.9,0 6.8,5.2 -0.2,5.2" fill="#0c0c0c" />
</g>
<g transform="translate(8.2 234.8)">
<ellipse cx="0" cy="-4.4" rx="6" ry="2" fill="none" stroke="#2c4a52" stroke-width="1.7"/>
<ellipse cx="0" cy="-4.4" rx="6" ry="2" fill="none" stroke="#9fdde6" stroke-width="0.8"/>
<ellipse cx="0" cy="-1.4000000000000004" rx="6" ry="2" fill="none" stroke="#2c4a52" stroke-width="1.7"/>
<ellipse cx="0" cy="-1.4000000000000004" rx="6" ry="2" fill="none" stroke="#9fdde6" stroke-width="0.8"/>
<ellipse cx="0" cy="1.5999999999999996" rx="6" ry="2" fill="none" stroke="#2c4a52" stroke-width="1.7"/>
<ellipse cx="0" cy="1.5999999999999996" rx="6" ry="2" fill="none" stroke="#9fdde6" stroke-width="0.8"/>
<ellipse cx="0" cy="4.6" rx="6" ry="2" fill="none" stroke="#2c4a52" stroke-width="1.7"/>
<ellipse cx="0" cy="4.6" rx="6" ry="2" fill="none" stroke="#9fdde6" stroke-width="0.8"/>
</g>
<g transform="translate(8.2 254.2)">
<g transform="rotate(40)"><rect x="-8" y="-1.8" width="10" height="3.6" fill="#9fdde6" stroke="#2c4a52" stroke-width="0.7" stroke-linejoin="round"/><rect x="2" y="-0.8" width="6" height="1.6" fill="#e8f8fa" stroke="#2c4a52" stroke-width="0.7" stroke-linejoin="round"/></g>
</g>
<g transform="translate(8.2 274)">
<path d="M-7.4,7.6 L-1.6,0 L0.4,1.4 L-5,9 Z" fill="#9fdde6" stroke="#2c4a52" stroke-width="0.7" stroke-linejoin="round"/>
<path d="M-1.4,0.4 L-3.4,-6 L-1.4,-6.6 L1,-0.4 L6.6,1.2 L6,3.2 L-0.4,2 Z" fill="#e4f8fa" stroke="#2c4a52" stroke-width="0.7" stroke-linejoin="round"/>
<path d="M-2.2,-6 Q5.6,-5.4 6.4,1.6" fill="none" stroke="#2c4a52" stroke-width="0.7"/>
</g>
<g transform="translate(8.2 293.4)">
<polygon points="6.6,0.0 4.43,1.84 4.67,4.67 1.84,4.43 0.0,6.6 -1.84,4.43 -4.67,4.67 -4.43,1.84 -6.6,0.0 -4.43,-1.84 -4.67,-4.67 -1.84,-4.43 -0.0,-6.6 1.84,-4.43 4.67,-4.67 4.43,-1.84" fill="#9fdde6" stroke="#2c4a52" stroke-width="0.7" stroke-linejoin="round"/>
<circle cx="0" cy="0" r="2.2" fill="#c5c5c5" stroke="#2c4a52" stroke-width="0.6"/>
</g>
<g transform="translate(8.2 313.6)">
<path d="M0,7 L0,-2 M-7,2.4 L7,2.4" stroke="#3a4e54" stroke-width="1" fill="none"/>
<path d="M-2.6,-1.6 C-3.4,-4 -2,-5 -0.6,-5 L0.2,-7.4 L2.6,-7 L2.2,-5.2 C4,-4.6 4,-2.6 2.6,-1.6 Z" fill="#9fdde6" stroke="#2c4a52" stroke-width="0.7" stroke-linejoin="round"/>
<circle cx="-6.6" cy="2.4" r="0.9" fill="#9fdde6"/><circle cx="6.6" cy="2.4" r="0.9" fill="#9fdde6"/>
</g>
<g transform="translate(8.2 332.4)">
<path d="M-7.4,1.4 L-2.6,-1.6 L2.4,-3.4 L7,-2.4 L4,0.6 L6.4,1.6 L-1,3.6 L-6.4,3.2 Z" fill="#9fdde6" stroke="#2c4a52" stroke-width="0.7" stroke-linejoin="round"/>
<path d="M-1.6,-1.8 L2.6,-3.2 L5.6,-2.6 L2,-0.6 Z" fill="#2a3438"/><path d="M2.4,-3.6 L6.8,-2.8" stroke="#d07838" stroke-width="0.9"/>
<circle cx="-3.6" cy="3.6" r="1.2" fill="#223"/><circle cx="3" cy="2.8" r="1.1" fill="#223"/>
</g>
<g transform="translate(8.2 351.6)">
<g transform="rotate(18)"><path d="M-5,-5.4 L1.6,-7 L5.4,-4.6 L5,4.4 L-1,6.8 L-5.4,4 Z" fill="#9fdde6" stroke="#2c4a52" stroke-width="0.7" stroke-linejoin="round"/>
<path d="M-5,-5.4 L-0.6,-3 L5.4,-4.6 M-0.6,-3 L-1,6.8 M-3,-1 L-3,3 M1.6,0 L3.6,-0.6 M1.6,2.6 L3.6,2" stroke="#2c4a52" stroke-width="0.6" fill="none"/></g>
</g>
<g transform="translate(8.2 370.8)">
<path d="M-7,-3.4 q1.75,-2.4 3.5,0 t3.5,0 t3.5,0 t3.5,0" fill="none" stroke="#2c4a52" stroke-width="1.7"/>
<path d="M-7,-3.4 q1.75,-2.4 3.5,0 t3.5,0 t3.5,0 t3.5,0" fill="none" stroke="#9fdde6" stroke-width="0.8"/>
<path d="M-7,0 q1.75,-2.4 3.5,0 t3.5,0 t3.5,0 t3.5,0" fill="none" stroke="#2c4a52" stroke-width="1.7"/>
<path d="M-7,0 q1.75,-2.4 3.5,0 t3.5,0 t3.5,0 t3.5,0" fill="none" stroke="#9fdde6" stroke-width="0.8"/>
<path d="M-7,3.4 q1.75,-2.4 3.5,0 t3.5,0 t3.5,0 t3.5,0" fill="none" stroke="#2c4a52" stroke-width="1.7"/>
<path d="M-7,3.4 q1.75,-2.4 3.5,0 t3.5,0 t3.5,0 t3.5,0" fill="none" stroke="#9fdde6" stroke-width="0.8"/>
</g>
<line x1="1" y1="380.1" x2="17.5" y2="380.1" stroke="#9a9a9a" stroke-width="1" />
<line x1="1" y1="381.1" x2="17.5" y2="381.1" stroke="#efefef" stroke-width="1" />
<g transform="translate(8.2 393.6)">
<ellipse cx="-1" cy="-1.6" rx="5.6" ry="3.6" fill="none" stroke="#2c4a52" stroke-width="2.2" transform="rotate(-20)"/><ellipse cx="-1" cy="-1.6" rx="5.6" ry="3.6" fill="none" stroke="#9fdde6" stroke-width="1.1" transform="rotate(-20)"/>
<ellipse cx="1.6" cy="2.4" rx="5" ry="3.2" fill="none" stroke="#2c4a52" stroke-width="2.2" transform="rotate(15)"/><ellipse cx="1.6" cy="2.4" rx="5" ry="3.2" fill="none" stroke="#d8f2f6" stroke-width="1.1" transform="rotate(15)"/>
</g>
<g transform="translate(8.2 413.6)">
<circle cx="0" cy="-5.6" r="1.7" fill="#9fdde6" stroke="#2c4a52" stroke-width="0.7" stroke-linejoin="round"/>
<path d="M-1.4,-3.6 L1.4,-3.6 L1.8,1.6 L3,7 L1.2,7 L0,2.6 L-1.2,7 L-3,7 L-1.8,1.6 Z M-1.4,-3.2 L-6,-4.6 L-6.2,-3.4 L-1.4,-1.6 M1.4,-3.2 L6,-4.6 L6.2,-3.4 L1.4,-1.6" fill="#9fdde6" stroke="#2c4a52" stroke-width="0.7" stroke-linejoin="round"/>
</g>
<g transform="translate(8.2 434)">
<polygon points="-6,-5 -1,-6.4 -1,5.6 -6,7" fill="#9fdde6" stroke="#2c4a52" stroke-width="0.7" stroke-linejoin="round"/>
<polygon points="-1,-6.4 5.6,-3.6 5.6,6.4 -1,5.6" fill="#5fb6c4" stroke="#2c4a52" stroke-width="0.7" stroke-linejoin="round"/>
<line x1="1" y1="-3" x2="4" y2="-2.2" stroke="#2c4a52" stroke-width="0.6" />
<line x1="1" y1="0.4" x2="4" y2="1.2000000000000002" stroke="#2c4a52" stroke-width="0.6" />
<line x1="1" y1="3.6" x2="4" y2="4.4" stroke="#2c4a52" stroke-width="0.6" />
</g>
<g transform="translate(8.2 453)">
<polygon points="-7.4,1 -3.4,-1.4 -0.6,1 -4.4,3.8" fill="#9fdde6" stroke="#2c4a52" stroke-width="0.7" stroke-linejoin="round"/>
<polygon points="0.6,-3.6 4.4,-6 7.4,-3.4 3.4,-0.8" fill="#9fdde6" stroke="#2c4a52" stroke-width="0.7" stroke-linejoin="round"/>
<line x1="-2" y1="0" x2="2" y2="-2.6" stroke="#2c4a52" stroke-width="0.9" />
<polygon points="-7.4,1 -4.4,3.8 -4.4,6 -7.4,3.2" fill="#5fb6c4" stroke="#2c4a52" stroke-width="0.7" stroke-linejoin="round"/>
</g>
<g transform="translate(8.2 471.6)">
<path d="M-2.6,-7 L0.4,-7 L0.4,3 L6.4,6.4 L5.2,7.4 L-2.6,4 Z" fill="#9fdde6" stroke="#2c4a52" stroke-width="0.7" stroke-linejoin="round"/>
<path d="M-6.4,2 L-2.6,4 M-5.4,-3 L-2.6,0" stroke="#5fb6c4" stroke-width="0.9"/>
</g>
<rect x="21" y="101" width="582" height="349" fill="#7e7e7e" />
<clipPath id="vp"><rect x="23" y="102.6" width="578" height="345.6"/></clipPath>
<g clip-path="url(#vp)">
<line x1="116" y1="443.5" x2="223.5" y2="368" stroke="#1a1a1a" stroke-width="0.9" />
<line x1="388.5" y1="395" x2="444" y2="426.8" stroke="#1a1a1a" stroke-width="0.9" />
<polygon points="70,192.5 290.3,96.8 543.2,183 339.3,344.8" fill="#4a4ac2" />
<polygon points="70,192.5 339.3,344.8 337.3,441.7 89.4,278.6" fill="#0f0f29" />
<polygon points="339.3,344.8 543.2,183 527.4,267 337.3,441.7" fill="#2b2b6c" />
<line x1="70" y1="192.5" x2="290.3" y2="96.8" stroke="#e6e6f0" stroke-width="1.0" />
<line x1="290.3" y1="96.8" x2="543.2" y2="183" stroke="#e6e6f0" stroke-width="1.0" />
<line x1="543.2" y1="183" x2="339.3" y2="344.8" stroke="#e6e6f0" stroke-width="1.0" />
<line x1="339.3" y1="344.8" x2="70" y2="192.5" stroke="#e6e6f0" stroke-width="1.0" />
<line x1="70" y1="192.5" x2="89.4" y2="278.6" stroke="#e6e6f0" stroke-width="1.0" />
<line x1="89.4" y1="278.6" x2="337.3" y2="441.7" stroke="#e6e6f0" stroke-width="1.0" />
<line x1="337.3" y1="441.7" x2="339.3" y2="344.8" stroke="#e6e6f0" stroke-width="1.0" />
<line x1="337.3" y1="441.7" x2="527.4" y2="267" stroke="#e6e6f0" stroke-width="1.0" />
<line x1="527.4" y1="267" x2="543.2" y2="183" stroke="#e6e6f0" stroke-width="1.0" />
<line x1="123" y1="222.4" x2="293" y2="96.8" stroke="#d4d4f2" stroke-width="0.85" />
<line x1="123" y1="222.4" x2="343.4" y2="115.4" stroke="#d4d4f2" stroke-width="0.85" />
<line x1="184" y1="257.5" x2="343.4" y2="115.4" stroke="#d4d4f2" stroke-width="0.85" />
<line x1="184" y1="257.5" x2="401" y2="136" stroke="#d4d4f2" stroke-width="0.85" />
<line x1="255" y1="297.3" x2="401" y2="136" stroke="#d4d4f2" stroke-width="0.85" />
<line x1="255" y1="297.3" x2="468.8" y2="157.4" stroke="#d4d4f2" stroke-width="0.85" />
<line x1="339.3" y1="344.8" x2="468.8" y2="157.4" stroke="#d4d4f2" stroke-width="0.85" />
<line x1="123" y1="222.4" x2="139.2" y2="312" stroke="#d8d8d8" stroke-width="0.9" />
<line x1="184" y1="257.5" x2="196" y2="349.3" stroke="#d8d8d8" stroke-width="0.9" />
<line x1="255" y1="297.3" x2="261.7" y2="391.7" stroke="#d8d8d8" stroke-width="0.9" />
<line x1="123" y1="222.4" x2="89.4" y2="278.6" stroke="#d8d8d8" stroke-width="0.9" />
<line x1="184" y1="257.5" x2="139.2" y2="312" stroke="#d8d8d8" stroke-width="0.9" />
<line x1="255" y1="297.3" x2="196" y2="349.3" stroke="#d8d8d8" stroke-width="0.9" />
<line x1="339.3" y1="344.8" x2="261.7" y2="391.7" stroke="#d8d8d8" stroke-width="0.9" />
<line x1="337.3" y1="441.7" x2="543.2" y2="183" stroke="#b9b9dc" stroke-width="0.8" />
<line x1="69.5" y1="193.4" x2="338.8" y2="345.7" stroke="#0a0a18" stroke-width="0.9" />
<line x1="69.8" y1="194.5" x2="338.3" y2="346.7" stroke="#c4c4c4" stroke-width="0.75" />
<line x1="339.90000000000003" y1="345.6" x2="542.8000000000001" y2="184.0" stroke="#14143c" stroke-width="0.9" />
<line x1="340.5" y1="346.5" x2="542.0" y2="185.4" stroke="#b4b4cc" stroke-width="0.75" />
<polyline points="133,163 64.5,191.8 70,215" fill="none" stroke="#e9e9e9" stroke-width="0.9" />
<polyline points="80.8,260.5 86.7,280.3 135.8,313.9" fill="none" stroke="#e9e9e9" stroke-width="0.9" />
<polyline points="245.5,114.3 280,100.5" fill="none" stroke="#e9e9e9" stroke-width="0.9" />
<polyline points="308,100.5 344.6,113.4" fill="none" stroke="#e9e9e9" stroke-width="0.9" />
<polyline points="473,157.2 547,181.3 542.6,204.8" fill="none" stroke="#e9e9e9" stroke-width="0.9" />
<polyline points="533.5,243 529.4,267.8 489.6,302" fill="none" stroke="#e9e9e9" stroke-width="0.9" />
<polyline points="541.4,185.6 508.6,212.6" fill="none" stroke="#e9e9e9" stroke-width="0.8" />
<polyline points="260,397 336.8,446.8 396,392.6" fill="none" stroke="#e9e9e9" stroke-width="0.9" />
<polyline points="336.5,421 336.8,446.8" fill="none" stroke="#e9e9e9" stroke-width="0.9" />
<polygon points="309.3,257.5 295.9,266 309,273.7 322,264.4" fill="#8282ac" />
<polyline points="295.9,266 309.3,257.5 322,264.4" fill="none" stroke="#e0c030" stroke-width="0.9" />
<line x1="277.4" y1="257.5" x2="295.9" y2="266" stroke="#e0c030" stroke-width="0.9" />
<line x1="322" y1="264.4" x2="336.8" y2="255" stroke="#e0c030" stroke-width="0.9" />
<polyline points="293.6,249 309.3,256.3 322.9,248.2" fill="none" stroke="#1818c8" stroke-width="0.8" />
<line x1="293.6" y1="249" x2="293.6" y2="265" stroke="#109030" stroke-width="0.9" />
<line x1="322.9" y1="248.2" x2="322.9" y2="264" stroke="#c01830" stroke-width="0.9" />
<line x1="309.3" y1="263" x2="309.3" y2="234" stroke="#0808c8" stroke-width="1" />
<polygon points="309.3,220.4 306.3,236 312.3,236" fill="#0000d0" />
<ellipse cx="309.3" cy="236" rx="3" ry="1.2" fill="#0000a8"/>
<polygon points="265,251.3 276.2,259.6 278.6,254.6" fill="#10a028" />
<ellipse cx="277.4" cy="257.1" rx="1.4" ry="2.7" fill="#0a5a14" transform="rotate(25 277.4 257.1)"/>
<polygon points="348.6,248 337.2,251.6 339.6,257" fill="#e01010" />
<ellipse cx="338.4" cy="254.3" rx="1.4" ry="2.8" fill="#6a0a0a" transform="rotate(-25 338.4 254.3)"/>
<text x="308.2" y="217.94" font-size="6.5" fill="#1414c8" >z</text>
<text x="263.5" y="247.84" font-size="6.5" fill="#e0b428" >y</text>
<text x="348.2" y="243.84" font-size="6.5" fill="#e0b428" >x</text>
<polygon points="104.2,185.8 179,214 160.8,179.2 180,185.8 204.2,230.8 156.7,249.6 137.2,242 174,227.8 99,197.5" fill="#f50a0c" />
<polygon points="570.7,234 575.7,246 501,275 537.4,289.4 518.3,296.9 471.1,278 494.3,233.5 513.7,226.5 496,261.3" fill="#f50a0c" />
<line x1="38" y1="433.7" x2="47.8" y2="427.4" stroke="#d02020" stroke-width="1.1" />
<line x1="38" y1="433.7" x2="27" y2="428" stroke="#20a020" stroke-width="1.1" />
<line x1="38" y1="434" x2="38" y2="421.8" stroke="#2222d8" stroke-width="1.7" />
<text x="37.6" y="419.58" font-size="6.6" fill="#2828d8" font-weight="bold">z</text>
<text x="47.6" y="424.7" font-size="6.4" fill="#d62020" >x</text>
<text x="26.3" y="424.5" font-size="6.4" fill="#28a428" >y</text>
</g>
<text x="24.8" y="110.11" font-size="7.8" fill="#cecece" textLength="35.0" lengthAdjust="spacingAndGlyphs" >Perspective</text>
<rect x="21.45" y="101.5" width="580.8" height="348.3" fill="none" stroke="#f4ee00" stroke-width="1.55"/>
<line x1="605.5" y1="258" x2="605.5" y2="474.5" stroke="#8a8a8a" stroke-width="0.9" />
<line x1="605" y1="474.4" x2="715" y2="474.4" stroke="#8a8a8a" stroke-width="0.9" />
<line x1="605" y1="475.4" x2="715.5" y2="475.4" stroke="#f4f4f4" stroke-width="0.9" />
<line x1="714.6" y1="258" x2="714.6" y2="475" stroke="#efefef" stroke-width="0.9" />
<line x1="605.1999999999999" y1="104" x2="605.1999999999999" y2="117" stroke="#f0f0f0" stroke-width="0.8" />
<line x1="622.1999999999999" y1="104" x2="622.1999999999999" y2="117" stroke="#a0a0a0" stroke-width="0.7" />
<rect x="623.4" y="103.6" width="17" height="13.8" fill="#cbcbcb" />
<polyline points="623.4,117.4 623.4,103.6 640.4,103.6" fill="none" stroke="#8a8a8a" stroke-width="0.8" />
<line x1="641.1999999999999" y1="104" x2="641.1999999999999" y2="117" stroke="#f0f0f0" stroke-width="0.8" />
<line x1="658.1999999999999" y1="104" x2="658.1999999999999" y2="117" stroke="#a0a0a0" stroke-width="0.7" />
<line x1="659.1999999999999" y1="104" x2="659.1999999999999" y2="117" stroke="#f0f0f0" stroke-width="0.8" />
<line x1="676.1999999999999" y1="104" x2="676.1999999999999" y2="117" stroke="#a0a0a0" stroke-width="0.7" />
<line x1="677.1999999999999" y1="104" x2="677.1999999999999" y2="117" stroke="#f0f0f0" stroke-width="0.8" />
<line x1="694.1999999999999" y1="104" x2="694.1999999999999" y2="117" stroke="#a0a0a0" stroke-width="0.7" />
<line x1="695.1999999999999" y1="104" x2="695.1999999999999" y2="117" stroke="#f0f0f0" stroke-width="0.8" />
<line x1="712.1999999999999" y1="104" x2="712.1999999999999" y2="117" stroke="#a0a0a0" stroke-width="0.7" />
<path d="M611.6,107.8 L618.4,113 L615.8,113.2 L617,115.8 L615.8,116.4 L614.6,113.8 L612.8,115.6 Z" fill="#fafafa" stroke="#555" stroke-width="0.6" stroke-linejoin="round"/>
<path d="M610.4,104.2 L611.2,106.4 L613.4,106.2 L611.8,107.8 L612.8,109.8 L610.6,108.8 L608.8,110.2 L609.2,107.8 L607.4,106.6 L609.6,106.2 Z" fill="#f6e890" stroke="#c8b040" stroke-width="0.3"/>
<path d="M627.2,116 C627,109 631,105.6 638,105.4 L638,109.6 C634,109.8 632,111.6 632,116 Z" fill="#4a5f98"/>
<path d="M627.8,116 C627.8,109.6 631.4,106.4 638,106.2" fill="none" stroke="#c0cdea" stroke-width="1.1"/>
<path d="M631.4,116 C631.4,111.4 633.6,109.2 638,109" fill="none" stroke="#1e2a50" stroke-width="0.9"/>
<rect x="637.4" y="115.4" width="1.1" height="1.1" fill="#333" />
<rect x="624.4" y="104.4" width="1.1" height="1.1" fill="#555" />
<path d="M649,108.6 L649,111 M649,111 L644.4,114.4 M649,111 L653.6,114.4 M649,111 L649,114.4" stroke="#333" stroke-width="0.7" fill="none"/>
<rect x="646.8" y="104.6" width="4.4" height="4.2" fill="#ececf6" stroke="#7474ac" stroke-width="0.75"/>
<rect x="642.5" y="113.8" width="3.4" height="3" fill="#f0f0fa" stroke="#7474ac" stroke-width="0.75"/>
<rect x="647.3" y="113.8" width="3.4" height="3" fill="#f0f0fa" stroke="#7474ac" stroke-width="0.75"/>
<rect x="652.0999999999999" y="113.8" width="3.4" height="3" fill="#f0f0fa" stroke="#7474ac" stroke-width="0.75"/>
<circle cx="668.4" cy="110.4" r="4.6" fill="#d8d8d8" stroke="#222" stroke-width="1.2"/><circle cx="668.4" cy="110.4" r="1.2" fill="#e02020"/>
<path d="M668.4,106 L668.4,114.8 M664,110.4 L672.8,110.4 M665.4,107.4 L671.4,113.4 M671.4,107.4 L665.4,113.4" stroke="#777" stroke-width="0.4"/>
<path d="M662.2,107.6 Q661,110.4 662.2,113.2 M660.6,108.4 Q659.8,110.4 660.6,112.4" fill="none" stroke="#666" stroke-width="0.6"/>
<rect x="680.8" y="104.8" width="11.4" height="9.2" fill="#f4f4f4" stroke="#222" stroke-width="1.5" rx="0.8"/>
<rect x="683" y="106.2" width="2.4" height="6.4" fill="#2a3cc8" />
<path d="M686.2,112.6 L688,106.4 L690,112.6 Z" fill="#d82828"/>
<rect x="683.4" y="115" width="6.4" height="1.6" fill="#333" />
<rect x="685.8" y="115.2" width="1.4" height="1" fill="#30c030" />
<path d="M697.8,106.2 Q699,104.4 702,104.6 L708.6,104.6 Q710,105.4 710.4,107.4 L708.4,107.6 Q707.6,106.6 706.2,106.8 L701.6,106.8 Q699.6,106.8 698.6,108 Z" fill="#2a2a2a"/>
<rect x="703" y="106.6" width="2.3" height="10.2" fill="#c0392b" stroke="#5a1a14" stroke-width="0.4"/>
<rect x="703" y="106.6" width="2.3" height="2" fill="#444" />
<rect x="607.6" y="121.8" width="91.2" height="11.8" fill="#e3e3e3" />
<polyline points="607.6,133.6 607.6,121.8 698.8000000000001,121.8" fill="none" stroke="#555" stroke-width="1" />
<polyline points="608.1,133.1 698.3000000000001,133.1 698.3000000000001,122.3" fill="none" stroke="#f8f8f8" stroke-width="1" />
<line x1="607.6" y1="122.4" x2="698.8" y2="122.4" stroke="#2f2f2f" stroke-width="1.1" />
<line x1="608.1" y1="121.8" x2="608.1" y2="133.6" stroke="#2f2f2f" stroke-width="1" />
<text x="610.3" y="130.46" font-size="7.4" fill="#111" textLength="18.1" lengthAdjust="spacingAndGlyphs" >Box01</text>
<rect x="701.8" y="122.2" width="9.6" height="10.8" fill="#5656de" />
<rect x="607.6" y="138" width="104.6" height="13.6" fill="#e3e3e3" />
<polyline points="607.6,151.6 607.6,138 712.2,138" fill="none" stroke="#555" stroke-width="1" />
<polyline points="608.1,151.1 711.7,151.1 711.7,138.5" fill="none" stroke="#f8f8f8" stroke-width="1" />
<text x="610.6" y="147.46" font-size="7.4" fill="#111" textLength="35.4" lengthAdjust="spacingAndGlyphs" >Modifier List</text>
<rect x="701.8" y="139.4" width="9.4" height="10.8" fill="#ece9d8" />
<polyline points="702.3,149.70000000000002 702.3,139.9 710.6999999999999,139.9" fill="none" stroke="#fff" stroke-width="1" />
<polyline points="702.3,149.70000000000002 710.6999999999999,149.70000000000002 710.6999999999999,139.9" fill="none" stroke="#6d6d6d" stroke-width="1" />
<polygon points="704.1,143.60000000000002 708.9,143.60000000000002 706.5,146.4" fill="#000" />
<rect x="608" y="155" width="103.4" height="78" fill="#e2e2e2" />
<polyline points="608,233 608,155 711.4,155" fill="none" stroke="#555" stroke-width="1" />
<polyline points="608.5,232.5 710.9,232.5 710.9,155.5" fill="none" stroke="#f8f8f8" stroke-width="1" />
<rect x="609" y="156" width="101.6" height="9.6" fill="#727272" />
<text x="623.6" y="163.49" font-size="7.2" fill="#0c0c0c" textLength="11.2" lengthAdjust="spacingAndGlyphs" >Box</text>
<path d="M612.6,244 L616.4,244 M616.4,241.6 L616.4,246.4 L618.2,245.6 L621.2,246 L621.2,242 L618.2,242.4 Z" fill="#111" stroke="#111" stroke-width="1"/>
<line x1="629" y1="238.6" x2="629" y2="249.6" stroke="#8a8a8a" stroke-width="0.9" />
<line x1="629.9" y1="238.6" x2="629.9" y2="249.6" stroke="#efefef" stroke-width="0.9" />
<rect x="632.6" y="237.4" width="15.6" height="13.2" fill="#d6d6d6" />
<polyline points="632.6,250.6 632.6,237.4 648.2,237.4" fill="none" stroke="#7c7c7c" stroke-width="0.9" />
<polyline points="633,250.4 648,250.4 648,237.8" fill="none" stroke="#f6f6f6" stroke-width="0.8" />
<rect x="638.6" y="240.4" width="1.5" height="7.4" fill="#fff" stroke="#222" stroke-width="0.7"/>
<rect x="641.6" y="240.4" width="1.5" height="7.4" fill="#fff" stroke="#222" stroke-width="0.7"/>
<line x1="637.4" y1="240.2" x2="644.4" y2="240.2" stroke="#222" stroke-width="0.8" />
<line x1="651.2" y1="238.6" x2="651.2" y2="249.6" stroke="#8a8a8a" stroke-width="0.9" />
<line x1="652.1" y1="238.6" x2="652.1" y2="249.6" stroke="#efefef" stroke-width="0.9" />
<path d="M659.6,240.4 L662.8,247.2 L666,240.4 M662.8,247.2 L662.8,244.6" fill="none" stroke="#aaaaaa" stroke-width="0.9"/>
<path d="M674.2,243.6 L674.8,248 L679.4,248 L680,243.6 Z M675.6,243.4 Q677.1,239.6 678.6,243.4" fill="none" stroke="#a8a8a8" stroke-width="0.8"/>
<line x1="689" y1="238.6" x2="689" y2="249.6" stroke="#8a8a8a" stroke-width="0.9" />
<line x1="689.9" y1="238.6" x2="689.9" y2="249.6" stroke="#efefef" stroke-width="0.9" />
<rect x="696.6" y="240.2" width="8.6" height="8.2" fill="#fbfbfb" stroke="#2030b8" stroke-width="1.1"/>
<rect x="696.6" y="240.2" width="8.6" height="2" fill="#2030b8" />
<path d="M699.6,245.2 L701,246.8 L703.4,243.8" fill="none" stroke="#111" stroke-width="0.8"/>
<rect x="702.4" y="245.8" width="2.6" height="2.4" fill="#ddd" stroke="#333" stroke-width="0.4"/>
<line x1="605.6" y1="258.7" x2="715" y2="258.7" stroke="#2f2f2f" stroke-width="1.4" />
<line x1="605.6" y1="263.6" x2="714.5" y2="263.6" stroke="#8a8a8a" stroke-width="0.8" />
<line x1="605.6" y1="264.4" x2="714.5" y2="264.4" stroke="#efefef" stroke-width="0.6" />
<rect x="609.4" y="267.8" width="99.2" height="9.4" fill="#b9b9b9" stroke="#3e3e3e" stroke-width="1" rx="1.6"/>
<line x1="610.4" y1="268.7" x2="707.4" y2="268.7" stroke="#dedede" stroke-width="0.6" />
<rect x="613.4" y="272.2" width="2.6" height="0.9" fill="#222" />
<text x="643" y="275.29" font-size="7.2" fill="#111" textLength="33.4" lengthAdjust="spacingAndGlyphs" >Parameters</text>
<polyline points="608.2,277.4 608.2,381.4 709.8,381.4 709.8,277.4" fill="none" stroke="#f2f2f2" stroke-width="0.9" />
<polyline points="609.1,277.4 609.1,380.5 708.9,380.5 708.9,277.4" fill="none" stroke="#9a9a9a" stroke-width="0.6" />
<text x="635.8" y="290.03" font-size="7.3" fill="#111" textLength="21.8" lengthAdjust="spacingAndGlyphs" >Length:</text>
<rect x="659.2" y="283.29999999999995" width="32.8" height="8.3" fill="#e3e3e3" />
<polyline points="659.2,291.59999999999997 659.2,283.29999999999995 692.0,283.29999999999995" fill="none" stroke="#555" stroke-width="1" />
<polyline points="659.7,291.09999999999997 691.5,291.09999999999997 691.5,283.79999999999995" fill="none" stroke="#f8f8f8" stroke-width="1" />
<line x1="659.2" y1="283.79999999999995" x2="692" y2="283.79999999999995" stroke="#2a2a2a" stroke-width="1.1" />
<line x1="659.7" y1="283.29999999999995" x2="659.7" y2="291.59999999999997" stroke="#2a2a2a" stroke-width="1" />
<text x="661.7" y="290.16" font-size="7.1" fill="#111" textLength="24.7" lengthAdjust="spacingAndGlyphs" >125,723</text>
<polygon points="697.5,284.3 699.3000000000001,286.5 695.7,286.5" fill="#111" />
<polygon points="697.5,290.8 699.3000000000001,288.6 695.7,288.6" fill="#111" />
<line x1="694.6" y1="283.3" x2="694.6" y2="291.7" stroke="#efefef" stroke-width="0.6" />
<line x1="700.6" y1="283.3" x2="700.6" y2="291.7" stroke="#9c9c9c" stroke-width="0.6" />
<text x="639.2" y="303.23" font-size="7.3" fill="#111" textLength="18.4" lengthAdjust="spacingAndGlyphs" >Width:</text>
<rect x="659.2" y="296.5" width="32.8" height="8.3" fill="#e3e3e3" />
<polyline points="659.2,304.8 659.2,296.5 692.0,296.5" fill="none" stroke="#555" stroke-width="1" />
<polyline points="659.7,304.3 691.5,304.3 691.5,297.0" fill="none" stroke="#f8f8f8" stroke-width="1" />
<line x1="659.2" y1="297.0" x2="692" y2="297.0" stroke="#2a2a2a" stroke-width="1.1" />
<line x1="659.7" y1="296.5" x2="659.7" y2="304.8" stroke="#2a2a2a" stroke-width="1" />
<text x="661.7" y="303.36" font-size="7.1" fill="#111" textLength="24.7" lengthAdjust="spacingAndGlyphs" >119,361</text>
<polygon points="697.5,297.50000000000006 699.3000000000001,299.70000000000005 695.7,299.70000000000005" fill="#111" />
<polygon points="697.5,304.00000000000006 699.3000000000001,301.80000000000007 695.7,301.80000000000007" fill="#111" />
<line x1="694.6" y1="296.50000000000006" x2="694.6" y2="304.90000000000003" stroke="#efefef" stroke-width="0.6" />
<line x1="700.6" y1="296.50000000000006" x2="700.6" y2="304.90000000000003" stroke="#9c9c9c" stroke-width="0.6" />
<text x="637" y="316.53" font-size="7.3" fill="#111" textLength="20.6" lengthAdjust="spacingAndGlyphs" >Height:</text>
<rect x="659.2" y="309.79999999999995" width="32.8" height="8.3" fill="#e3e3e3" />
<polyline points="659.2,318.09999999999997 659.2,309.79999999999995 692.0,309.79999999999995" fill="none" stroke="#555" stroke-width="1" />
<polyline points="659.7,317.59999999999997 691.5,317.59999999999997 691.5,310.29999999999995" fill="none" stroke="#f8f8f8" stroke-width="1" />
<line x1="659.2" y1="310.29999999999995" x2="692" y2="310.29999999999995" stroke="#2a2a2a" stroke-width="1.1" />
<line x1="659.7" y1="309.79999999999995" x2="659.7" y2="318.09999999999997" stroke="#2a2a2a" stroke-width="1" />
<text x="661.7" y="316.66" font-size="7.1" fill="#111" textLength="20.9" lengthAdjust="spacingAndGlyphs" >39,108</text>
<polygon points="697.5,310.8 699.3000000000001,313.0 695.7,313.0" fill="#111" />
<polygon points="697.5,317.3 699.3000000000001,315.1 695.7,315.1" fill="#111" />
<line x1="694.6" y1="309.8" x2="694.6" y2="318.2" stroke="#efefef" stroke-width="0.6" />
<line x1="700.6" y1="309.8" x2="700.6" y2="318.2" stroke="#9c9c9c" stroke-width="0.6" />
<text x="619.2" y="334.03" font-size="7.3" fill="#111" textLength="38.4" lengthAdjust="spacingAndGlyphs" >Length Segs:</text>
<rect x="659.2" y="327.29999999999995" width="32.8" height="8.3" fill="#e3e3e3" />
<polyline points="659.2,335.59999999999997 659.2,327.29999999999995 692.0,327.29999999999995" fill="none" stroke="#555" stroke-width="1" />
<polyline points="659.7,335.09999999999997 691.5,335.09999999999997 691.5,327.79999999999995" fill="none" stroke="#f8f8f8" stroke-width="1" />
<line x1="659.2" y1="327.79999999999995" x2="692" y2="327.79999999999995" stroke="#2a2a2a" stroke-width="1.1" />
<line x1="659.7" y1="327.29999999999995" x2="659.7" y2="335.59999999999997" stroke="#2a2a2a" stroke-width="1" />
<text x="661.7" y="334.16" font-size="7.1" fill="#111" textLength="3.7" lengthAdjust="spacingAndGlyphs" >4</text>
<polygon points="697.5,328.3 699.3000000000001,330.5 695.7,330.5" fill="#111" />
<polygon points="697.5,334.8 699.3000000000001,332.6 695.7,332.6" fill="#111" />
<line x1="694.6" y1="327.3" x2="694.6" y2="335.7" stroke="#efefef" stroke-width="0.6" />
<line x1="700.6" y1="327.3" x2="700.6" y2="335.7" stroke="#9c9c9c" stroke-width="0.6" />
<text x="622" y="347.03" font-size="7.3" fill="#111" textLength="35.6" lengthAdjust="spacingAndGlyphs" >Width Segs:</text>
<rect x="659.2" y="340.29999999999995" width="32.8" height="8.3" fill="#e3e3e3" />
<polyline points="659.2,348.59999999999997 659.2,340.29999999999995 692.0,340.29999999999995" fill="none" stroke="#555" stroke-width="1" />
<polyline points="659.7,348.09999999999997 691.5,348.09999999999997 691.5,340.79999999999995" fill="none" stroke="#f8f8f8" stroke-width="1" />
<line x1="659.2" y1="340.79999999999995" x2="692" y2="340.79999999999995" stroke="#2a2a2a" stroke-width="1.1" />
<line x1="659.7" y1="340.29999999999995" x2="659.7" y2="348.59999999999997" stroke="#2a2a2a" stroke-width="1" />
<text x="662.2" y="347.16" font-size="7.1" fill="#111" textLength="2.6" lengthAdjust="spacingAndGlyphs" >1</text>
<polygon points="697.5,341.3 699.3000000000001,343.5 695.7,343.5" fill="#111" />
<polygon points="697.5,347.8 699.3000000000001,345.6 695.7,345.6" fill="#111" />
<line x1="694.6" y1="340.3" x2="694.6" y2="348.7" stroke="#efefef" stroke-width="0.6" />
<line x1="700.6" y1="340.3" x2="700.6" y2="348.7" stroke="#9c9c9c" stroke-width="0.6" />
<text x="620" y="360.13" font-size="7.3" fill="#111" textLength="37.6" lengthAdjust="spacingAndGlyphs" >Height Segs:</text>
<rect x="659.2" y="353.4" width="32.8" height="8.3" fill="#e3e3e3" />
<polyline points="659.2,361.7 659.2,353.4 692.0,353.4" fill="none" stroke="#555" stroke-width="1" />
<polyline points="659.7,361.2 691.5,361.2 691.5,353.9" fill="none" stroke="#f8f8f8" stroke-width="1" />
<line x1="659.2" y1="353.9" x2="692" y2="353.9" stroke="#2a2a2a" stroke-width="1.1" />
<line x1="659.7" y1="353.4" x2="659.7" y2="361.7" stroke="#2a2a2a" stroke-width="1" />
<text x="662.2" y="360.26" font-size="7.1" fill="#111" textLength="2.6" lengthAdjust="spacingAndGlyphs" >1</text>
<polygon points="697.5,354.40000000000003 699.3000000000001,356.6 695.7,356.6" fill="#111" />
<polygon points="697.5,360.90000000000003 699.3000000000001,358.70000000000005 695.7,358.70000000000005" fill="#111" />
<line x1="694.6" y1="353.40000000000003" x2="694.6" y2="361.8" stroke="#efefef" stroke-width="0.6" />
<line x1="700.6" y1="353.40000000000003" x2="700.6" y2="361.8" stroke="#9c9c9c" stroke-width="0.6" />
<rect x="614.2" y="369.4" width="7" height="7" fill="#fafafa" />
<polyline points="614.2,376.4 614.2,369.4 621.2,369.4" fill="none" stroke="#3a3a3a" stroke-width="1" />
<polyline points="614.6,376.2 621,376.2 621,369.8" fill="none" stroke="#efefef" stroke-width="0.7" />
<path d="M615.8,372.6 L617.4,374.6 L620,370.8" fill="none" stroke="#000" stroke-width="1.1"/>
<text x="625.3" y="375.59" font-size="7.2" fill="#111" textLength="78.5" lengthAdjust="spacingAndGlyphs" >Generate Mapping Coords.</text>
<line x1="118" y1="461.4" x2="604" y2="461.4" stroke="#dedede" stroke-width="0.9" />
<text x="23.6" y="458.94" font-size="7.6" fill="#333" >&lt;</text>
<rect x="30.8" y="451.4" width="77.6" height="9.8" fill="#c9c9c9" />
<polyline points="30.8,461.2 30.8,451.4 108.4,451.4" fill="none" stroke="#f6f6f6" stroke-width="0.9" />
<polyline points="31,461 108.4,461 108.4,451.2" fill="none" stroke="#2c2c2c" stroke-width="1.2" />
<text x="59" y="458.96" font-size="7.4" fill="#111" textLength="23" lengthAdjust="spacingAndGlyphs" >0 / 100</text>
<text x="111.6" y="458.94" font-size="7.6" fill="#333" >&gt;</text>
<line x1="118.2" y1="451" x2="118.2" y2="461.4" stroke="#9c9c9c" stroke-width="0.7" />
<line x1="119" y1="451" x2="119" y2="461.4" stroke="#e6e6e6" stroke-width="0.7" />
<g transform="translate(34.2 470.4)" stroke="#111" fill="none" stroke-width="1.1">
<path d="M-4,-4 L4,-4 M-4,4 L4,4 M0,-4 L0,4 M-4,0 L4,0"/><rect x="-4.4" y="-5" width="2.2" height="2.2" fill="#111"/><rect x="2.2" y="-5" width="2.2" height="2.2" fill="#111"/><rect x="-4.4" y="2.8" width="2.2" height="2.2" fill="#111"/><rect x="2.2" y="2.8" width="2.2" height="2.2" fill="#111"/>
</g>
<rect x="52.4" y="463" width="5.4" height="15.4" fill="#8eb0d4" stroke="#4a78a8" stroke-width="0.8"/>
<line x1="54.8" y1="462.5" x2="54.8" y2="478.6" stroke="#8a8c90" stroke-width="1" />
<line x1="59.93" y1="462.5" x2="59.93" y2="469.8" stroke="#8e9094" stroke-width="1.05" />
<line x1="65.07" y1="462.5" x2="65.07" y2="469.8" stroke="#8e9094" stroke-width="1.05" />
<line x1="70.2" y1="462.5" x2="70.2" y2="469.8" stroke="#8e9094" stroke-width="1.05" />
<line x1="75.34" y1="462.5" x2="75.34" y2="469.8" stroke="#8e9094" stroke-width="1.05" />
<line x1="80.47" y1="462.5" x2="80.47" y2="469.8" stroke="#8e9094" stroke-width="1.05" />
<line x1="85.61" y1="462.5" x2="85.61" y2="469.8" stroke="#8e9094" stroke-width="1.05" />
<line x1="90.75" y1="462.5" x2="90.75" y2="469.8" stroke="#8e9094" stroke-width="1.05" />
<line x1="95.88" y1="462.5" x2="95.88" y2="469.8" stroke="#8e9094" stroke-width="1.05" />
<line x1="101.01" y1="462.5" x2="101.01" y2="469.8" stroke="#8e9094" stroke-width="1.05" />
<line x1="106.15" y1="462.5" x2="106.15" y2="478.6" stroke="#8a8c90" stroke-width="1" />
<line x1="111.28" y1="462.5" x2="111.28" y2="469.8" stroke="#8e9094" stroke-width="1.05" />
<line x1="116.42" y1="462.5" x2="116.42" y2="469.8" stroke="#8e9094" stroke-width="1.05" />
<line x1="121.55" y1="462.5" x2="121.55" y2="469.8" stroke="#8e9094" stroke-width="1.05" />
<line x1="126.69" y1="462.5" x2="126.69" y2="469.8" stroke="#8e9094" stroke-width="1.05" />
<line x1="131.82" y1="462.5" x2="131.82" y2="469.8" stroke="#8e9094" stroke-width="1.05" />
<line x1="136.96" y1="462.5" x2="136.96" y2="469.8" stroke="#8e9094" stroke-width="1.05" />
<line x1="142.09" y1="462.5" x2="142.09" y2="469.8" stroke="#8e9094" stroke-width="1.05" />
<line x1="147.23" y1="462.5" x2="147.23" y2="469.8" stroke="#8e9094" stroke-width="1.05" />
<line x1="152.37" y1="462.5" x2="152.37" y2="469.8" stroke="#8e9094" stroke-width="1.05" />
<line x1="157.5" y1="462.5" x2="157.5" y2="478.6" stroke="#8a8c90" stroke-width="1" />
<line x1="162.63" y1="462.5" x2="162.63" y2="469.8" stroke="#8e9094" stroke-width="1.05" />
<line x1="167.77" y1="462.5" x2="167.77" y2="469.8" stroke="#8e9094" stroke-width="1.05" />
<line x1="172.9" y1="462.5" x2="172.9" y2="469.8" stroke="#8e9094" stroke-width="1.05" />
<line x1="178.04" y1="462.5" x2="178.04" y2="469.8" stroke="#8e9094" stroke-width="1.05" />
<line x1="183.18" y1="462.5" x2="183.18" y2="469.8" stroke="#8e9094" stroke-width="1.05" />
<line x1="188.31" y1="462.5" x2="188.31" y2="469.8" stroke="#8e9094" stroke-width="1.05" />
<line x1="193.44" y1="462.5" x2="193.44" y2="469.8" stroke="#8e9094" stroke-width="1.05" />
<line x1="198.58" y1="462.5" x2="198.58" y2="469.8" stroke="#8e9094" stroke-width="1.05" />
<line x1="203.71" y1="462.5" x2="203.71" y2="469.8" stroke="#8e9094" stroke-width="1.05" />
<line x1="208.85" y1="462.5" x2="208.85" y2="478.6" stroke="#8a8c90" stroke-width="1" />
<line x1="213.99" y1="462.5" x2="213.99" y2="469.8" stroke="#8e9094" stroke-width="1.05" />
<line x1="219.12" y1="462.5" x2="219.12" y2="469.8" stroke="#8e9094" stroke-width="1.05" />
<line x1="224.25" y1="462.5" x2="224.25" y2="469.8" stroke="#8e9094" stroke-width="1.05" />
<line x1="229.39" y1="462.5" x2="229.39" y2="469.8" stroke="#8e9094" stroke-width="1.05" />
<line x1="234.52" y1="462.5" x2="234.52" y2="469.8" stroke="#8e9094" stroke-width="1.05" />
<line x1="239.66" y1="462.5" x2="239.66" y2="469.8" stroke="#8e9094" stroke-width="1.05" />
<line x1="244.8" y1="462.5" x2="244.8" y2="469.8" stroke="#8e9094" stroke-width="1.05" />
<line x1="249.93" y1="462.5" x2="249.93" y2="469.8" stroke="#8e9094" stroke-width="1.05" />
<line x1="255.06" y1="462.5" x2="255.06" y2="469.8" stroke="#8e9094" stroke-width="1.05" />
<line x1="260.2" y1="462.5" x2="260.2" y2="478.6" stroke="#8a8c90" stroke-width="1" />
<line x1="265.33" y1="462.5" x2="265.33" y2="469.8" stroke="#8e9094" stroke-width="1.05" />
<line x1="270.47" y1="462.5" x2="270.47" y2="469.8" stroke="#8e9094" stroke-width="1.05" />
<line x1="275.6" y1="462.5" x2="275.6" y2="469.8" stroke="#8e9094" stroke-width="1.05" />
<line x1="280.74" y1="462.5" x2="280.74" y2="469.8" stroke="#8e9094" stroke-width="1.05" />
<line x1="285.88" y1="462.5" x2="285.88" y2="469.8" stroke="#8e9094" stroke-width="1.05" />
<line x1="291.01" y1="462.5" x2="291.01" y2="469.8" stroke="#8e9094" stroke-width="1.05" />
<line x1="296.14" y1="462.5" x2="296.14" y2="469.8" stroke="#8e9094" stroke-width="1.05" />
<line x1="301.28" y1="462.5" x2="301.28" y2="469.8" stroke="#8e9094" stroke-width="1.05" />
<line x1="306.41" y1="462.5" x2="306.41" y2="469.8" stroke="#8e9094" stroke-width="1.05" />
<line x1="311.55" y1="462.5" x2="311.55" y2="478.6" stroke="#8a8c90" stroke-width="1" />
<line x1="316.69" y1="462.5" x2="316.69" y2="469.8" stroke="#8e9094" stroke-width="1.05" />
<line x1="321.82" y1="462.5" x2="321.82" y2="469.8" stroke="#8e9094" stroke-width="1.05" />
<line x1="326.95" y1="462.5" x2="326.95" y2="469.8" stroke="#8e9094" stroke-width="1.05" />
<line x1="332.09" y1="462.5" x2="332.09" y2="469.8" stroke="#8e9094" stroke-width="1.05" />
<line x1="337.23" y1="462.5" x2="337.23" y2="469.8" stroke="#8e9094" stroke-width="1.05" />
<line x1="342.36" y1="462.5" x2="342.36" y2="469.8" stroke="#8e9094" stroke-width="1.05" />
<line x1="347.5" y1="462.5" x2="347.5" y2="469.8" stroke="#8e9094" stroke-width="1.05" />
<line x1="352.63" y1="462.5" x2="352.63" y2="469.8" stroke="#8e9094" stroke-width="1.05" />
<line x1="357.76" y1="462.5" x2="357.76" y2="469.8" stroke="#8e9094" stroke-width="1.05" />
<line x1="362.9" y1="462.5" x2="362.9" y2="478.6" stroke="#8a8c90" stroke-width="1" />
<line x1="368.04" y1="462.5" x2="368.04" y2="469.8" stroke="#8e9094" stroke-width="1.05" />
<line x1="373.17" y1="462.5" x2="373.17" y2="469.8" stroke="#8e9094" stroke-width="1.05" />
<line x1="378.31" y1="462.5" x2="378.31" y2="469.8" stroke="#8e9094" stroke-width="1.05" />
<line x1="383.44" y1="462.5" x2="383.44" y2="469.8" stroke="#8e9094" stroke-width="1.05" />
<line x1="388.57" y1="462.5" x2="388.57" y2="469.8" stroke="#8e9094" stroke-width="1.05" />
<line x1="393.71" y1="462.5" x2="393.71" y2="469.8" stroke="#8e9094" stroke-width="1.05" />
<line x1="398.84" y1="462.5" x2="398.84" y2="469.8" stroke="#8e9094" stroke-width="1.05" />
<line x1="403.98" y1="462.5" x2="403.98" y2="469.8" stroke="#8e9094" stroke-width="1.05" />
<line x1="409.12" y1="462.5" x2="409.12" y2="469.8" stroke="#8e9094" stroke-width="1.05" />
<line x1="414.25" y1="462.5" x2="414.25" y2="478.6" stroke="#8a8c90" stroke-width="1" />
<line x1="419.38" y1="462.5" x2="419.38" y2="469.8" stroke="#8e9094" stroke-width="1.05" />
<line x1="424.52" y1="462.5" x2="424.52" y2="469.8" stroke="#8e9094" stroke-width="1.05" />
<line x1="429.65" y1="462.5" x2="429.65" y2="469.8" stroke="#8e9094" stroke-width="1.05" />
<line x1="434.79" y1="462.5" x2="434.79" y2="469.8" stroke="#8e9094" stroke-width="1.05" />
<line x1="439.93" y1="462.5" x2="439.93" y2="469.8" stroke="#8e9094" stroke-width="1.05" />
<line x1="445.06" y1="462.5" x2="445.06" y2="469.8" stroke="#8e9094" stroke-width="1.05" />
<line x1="450.19" y1="462.5" x2="450.19" y2="469.8" stroke="#8e9094" stroke-width="1.05" />
<line x1="455.33" y1="462.5" x2="455.33" y2="469.8" stroke="#8e9094" stroke-width="1.05" />
<line x1="460.46" y1="462.5" x2="460.46" y2="469.8" stroke="#8e9094" stroke-width="1.05" />
<line x1="465.6" y1="462.5" x2="465.6" y2="478.6" stroke="#8a8c90" stroke-width="1" />
<line x1="470.74" y1="462.5" x2="470.74" y2="469.8" stroke="#8e9094" stroke-width="1.05" />
<line x1="475.87" y1="462.5" x2="475.87" y2="469.8" stroke="#8e9094" stroke-width="1.05" />
<line x1="481.0" y1="462.5" x2="481.0" y2="469.8" stroke="#8e9094" stroke-width="1.05" />
<line x1="486.14" y1="462.5" x2="486.14" y2="469.8" stroke="#8e9094" stroke-width="1.05" />
<line x1="491.27" y1="462.5" x2="491.27" y2="469.8" stroke="#8e9094" stroke-width="1.05" />
<line x1="496.41" y1="462.5" x2="496.41" y2="469.8" stroke="#8e9094" stroke-width="1.05" />
<line x1="501.55" y1="462.5" x2="501.55" y2="469.8" stroke="#8e9094" stroke-width="1.05" />
<line x1="506.68" y1="462.5" x2="506.68" y2="469.8" stroke="#8e9094" stroke-width="1.05" />
<line x1="511.81" y1="462.5" x2="511.81" y2="469.8" stroke="#8e9094" stroke-width="1.05" />
<line x1="516.95" y1="462.5" x2="516.95" y2="478.6" stroke="#8a8c90" stroke-width="1" />
<line x1="522.08" y1="462.5" x2="522.08" y2="469.8" stroke="#8e9094" stroke-width="1.05" />
<line x1="527.22" y1="462.5" x2="527.22" y2="469.8" stroke="#8e9094" stroke-width="1.05" />
<line x1="532.36" y1="462.5" x2="532.36" y2="469.8" stroke="#8e9094" stroke-width="1.05" />
<line x1="537.49" y1="462.5" x2="537.49" y2="469.8" stroke="#8e9094" stroke-width="1.05" />
<line x1="542.62" y1="462.5" x2="542.62" y2="469.8" stroke="#8e9094" stroke-width="1.05" />
<line x1="547.76" y1="462.5" x2="547.76" y2="469.8" stroke="#8e9094" stroke-width="1.05" />
<line x1="552.89" y1="462.5" x2="552.89" y2="469.8" stroke="#8e9094" stroke-width="1.05" />
<line x1="558.03" y1="462.5" x2="558.03" y2="469.8" stroke="#8e9094" stroke-width="1.05" />
<line x1="563.16" y1="462.5" x2="563.16" y2="469.8" stroke="#8e9094" stroke-width="1.05" />
<line x1="568.3" y1="462.5" x2="568.3" y2="478.6" stroke="#8a8c90" stroke-width="1" />
<rect x="52.6" y="470.6" width="4.4" height="6.6" fill="#8eb0d4" />
<text x="52.9" y="476.59" font-size="7.2" fill="#1c3c78" textLength="3.8" lengthAdjust="spacingAndGlyphs" >0</text>
<rect x="101.85" y="470.6" width="8.6" height="6.6" fill="#c5c5c5" />
<text x="102.15" y="476.59" font-size="7.2" fill="#111" textLength="8.0" lengthAdjust="spacingAndGlyphs" >10</text>
<rect x="153.2" y="470.6" width="8.6" height="6.6" fill="#c5c5c5" />
<text x="153.5" y="476.59" font-size="7.2" fill="#111" textLength="8.0" lengthAdjust="spacingAndGlyphs" >20</text>
<rect x="204.55" y="470.6" width="8.6" height="6.6" fill="#c5c5c5" />
<text x="204.85" y="476.59" font-size="7.2" fill="#111" textLength="8.0" lengthAdjust="spacingAndGlyphs" >30</text>
<rect x="255.9" y="470.6" width="8.6" height="6.6" fill="#c5c5c5" />
<text x="256.2" y="476.59" font-size="7.2" fill="#111" textLength="8.0" lengthAdjust="spacingAndGlyphs" >40</text>
<rect x="307.25" y="470.6" width="8.6" height="6.6" fill="#c5c5c5" />
<text x="307.55" y="476.59" font-size="7.2" fill="#111" textLength="8.0" lengthAdjust="spacingAndGlyphs" >50</text>
<rect x="358.6" y="470.6" width="8.6" height="6.6" fill="#c5c5c5" />
<text x="358.9" y="476.59" font-size="7.2" fill="#111" textLength="8.0" lengthAdjust="spacingAndGlyphs" >60</text>
<rect x="409.95" y="470.6" width="8.6" height="6.6" fill="#c5c5c5" />
<text x="410.25" y="476.59" font-size="7.2" fill="#111" textLength="8.0" lengthAdjust="spacingAndGlyphs" >70</text>
<rect x="461.3" y="470.6" width="8.6" height="6.6" fill="#c5c5c5" />
<text x="461.6" y="476.59" font-size="7.2" fill="#111" textLength="8.0" lengthAdjust="spacingAndGlyphs" >80</text>
<rect x="512.65" y="470.6" width="8.6" height="6.6" fill="#c5c5c5" />
<text x="512.95" y="476.59" font-size="7.2" fill="#111" textLength="8.0" lengthAdjust="spacingAndGlyphs" >90</text>
<rect x="562.0" y="470.6" width="12.6" height="6.6" fill="#c5c5c5" />
<text x="562.3" y="476.59" font-size="7.2" fill="#111" textLength="12.0" lengthAdjust="spacingAndGlyphs" >100</text>
<line x1="20" y1="479.2" x2="604" y2="479.2" stroke="#b4b4b4" stroke-width="0.7" />
<rect x="0" y="480.4" width="182" height="6" fill="#e6d0d0" />
<line x1="0" y1="480.2" x2="182" y2="480.2" stroke="#b8a0a0" stroke-width="0.7" />
<line x1="182.6" y1="480" x2="182.6" y2="486" stroke="#f8f8f8" stroke-width="0.9" />
<line x1="186" y1="481" x2="186" y2="486" stroke="#8c8c8c" stroke-width="0.8" />
<path d="M193.4,486 L193.4,484.4 Q195.2,481.6 197,484.4 L197,486" fill="none" stroke="#111" stroke-width="0.9"/>
<rect x="207.4" y="481.8" width="9.4" height="6" fill="#d8d8d8" stroke="#222" stroke-width="0.9"/>
<line x1="212.1" y1="483" x2="212.1" y2="486" stroke="#222" stroke-width="0.8" />
<text x="221.6" y="488.72" font-size="7" fill="#111" >X:</text>
<rect x="228" y="481.4" width="36.60000000000002" height="5" fill="#f2f2f2" />
<polyline points="228,486 228,481.4 264.6,481.4" fill="none" stroke="#2a2a2a" stroke-width="1.1" />
<text x="230.4" y="489.72" font-size="7" fill="#111" >22,084</text>
<polygon points="269.0,483 271.0,485.4 267.0,485.4" fill="#111" />
<text x="273.6" y="488.72" font-size="7" fill="#111" >Y:</text>
<rect x="280" y="481.4" width="35.60000000000002" height="5" fill="#f2f2f2" />
<polyline points="280,486 280,481.4 315.6,481.4" fill="none" stroke="#2a2a2a" stroke-width="1.1" />
<text x="282.4" y="489.72" font-size="7" fill="#111" >10,014</text>
<polygon points="320.0,483 322.0,485.4 318.0,485.4" fill="#111" />
<text x="325.4" y="488.72" font-size="7" fill="#111" >Z:</text>
<rect x="332" y="481.4" width="34.80000000000001" height="5" fill="#f2f2f2" />
<polyline points="332,486 332,481.4 366.8,481.4" fill="none" stroke="#2a2a2a" stroke-width="1.1" />
<text x="334.4" y="489.72" font-size="7" fill="#111" >0,0</text>
<polygon points="371.2,483 373.2,485.4 369.2,485.4" fill="#111" />
<rect x="378" y="481.6" width="60" height="5" fill="#cfcfcf" />
<polyline points="378,486 378,481.6 438,481.6" fill="none" stroke="#8a8a8a" stroke-width="0.8" />
<text x="381" y="489.92" font-size="7" fill="#222" >Grid = 10,0</text>
<rect x="450" y="481.4" width="16" height="5" fill="#cdcdcd" />
<line x1="450" y1="481.4" x2="466" y2="481.4" stroke="#f0f0f0" stroke-width="0.8" />
<rect x="471" y="481.6" width="24" height="5" fill="#cacaca" />
<polyline points="471,486 471,481.6 495,481.6" fill="none" stroke="#f4f4f4" stroke-width="0.8" />
<text x="473" y="489.78" font-size="6.6" fill="#222" textLength="20" lengthAdjust="spacingAndGlyphs" >Auto Key</text>
<rect x="502.6" y="481.4" width="70" height="5" fill="#efefef" />
<polyline points="502.6,486 502.6,481.4 572.6,481.4" fill="none" stroke="#333" stroke-width="1" />
<text x="505" y="489.92" font-size="7" fill="#222" >Selected</text>
<rect x="563.6" y="482.4" width="8" height="4" fill="#ece9d8" />
<rect x="579" y="483" width="1.6" height="3" fill="#111" />
<rect x="583.4" y="483" width="1.6" height="3" fill="#111" />
<rect x="588" y="483" width="1.6" height="3" fill="#111" />
<rect x="610.4" y="481.2" width="10" height="6" fill="#f2f2f2" stroke="#111" stroke-width="1.3"/>
<polygon points="613.6,483 617.6,486 613.6,486" fill="#111" />
<rect x="629" y="483.4" width="1.6" height="3" fill="#111" />
<rect x="632" y="483.4" width="1.6" height="3" fill="#111" />
<rect x="635" y="483.4" width="1.6" height="3" fill="#111" />
<line x1="642.4" y1="482" x2="642.4" y2="486" stroke="#8a8a8a" stroke-width="0.8" />
<rect x="646" y="483.4" width="1.6" height="3" fill="#111" />
<rect x="650" y="483.4" width="1.6" height="3" fill="#111" />
<line x1="660.4" y1="481" x2="660.4" y2="486" stroke="#8a8a8a" stroke-width="0.8" />
<path d="M664.6,486 Q667.4,480.6 670.4,486" fill="none" stroke="#3848b8" stroke-width="1"/>
<rect x="676" y="482.2" width="7" height="4" fill="#f0e0e0" stroke="#c03030" stroke-width="1"/>
<line x1="679.5" y1="482" x2="679.5" y2="486" stroke="#c03030" stroke-width="0.8" />
<path d="M689.6,484 L697,484 M697,482.4 L698.4,481.4" stroke="#3848b8" stroke-width="1.4" fill="none"/>
<rect x="705" y="482.2" width="7" height="4" fill="#f0e0e0" stroke="#c03030" stroke-width="1"/>
<line x1="708.5" y1="482" x2="708.5" y2="486" stroke="#c03030" stroke-width="0.8" />
</svg></body></html>
